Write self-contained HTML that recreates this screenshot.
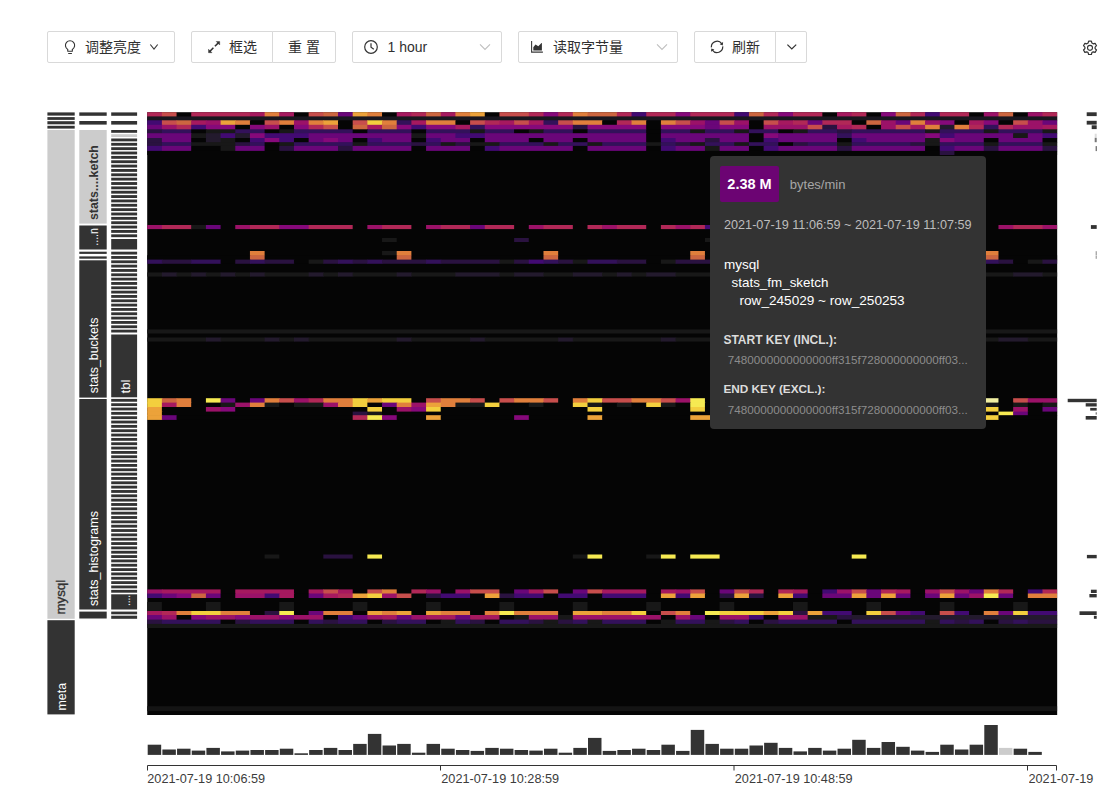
<!DOCTYPE html>
<html lang="zh-CN">
<head>
<meta charset="utf-8">
<title>Key Visualizer</title>
<style>
html,body{margin:0;padding:0;background:#fff;}
body{width:1113px;height:807px;position:relative;overflow:hidden;font-family:"Liberation Sans","Noto Sans CJK SC",sans-serif;color:#333;}
.btn{position:absolute;top:31px;height:32px;box-sizing:border-box;border:1px solid #d9d9d9;background:#fff;border-radius:2px;font-size:14px;line-height:30px;color:#303030;white-space:nowrap;}
.btn span.t{position:absolute;top:0;}
.btn svg{position:absolute;}
#viz{position:absolute;left:0;top:0;}
#viz text{font-family:"Liberation Sans","Noto Sans CJK SC",sans-serif;}
.ax{position:absolute;top:771px;font-size:12.7px;line-height:16px;color:#3c3c3c;white-space:nowrap;}
#tip{position:absolute;left:710px;top:156px;width:276px;height:272.5px;background:#333333;border-radius:4px;color:#fff;}
#tip div{position:absolute;white-space:nowrap;}
</style>
</head>
<body>
<!-- toolbar -->
<div class="btn" style="left:47px;width:128px;">
  <svg style="left:16px;top:7px" width="14" height="16" viewBox="0 0 14 16"><path d="M3.74 12.3V10.4A4.6 4.6 0 1 1 8.34 10.4V12.3M3.3 12.3H8.8M4.2 14.5H7.9" fill="none" stroke="#333" stroke-width="1.1"/></svg>
  <span class="t" style="left:37px;">调整亮度</span>
  <svg style="left:101px;top:10px" width="12" height="10" viewBox="0 0 12 10"><path d="M1.3 2.5L5 7L8.7 2.5" fill="none" stroke="#3a3a3a" stroke-width="1.15"/></svg>
</div>
<div class="btn" style="left:191px;width:82px;border-radius:2px 0 0 2px;">
  <svg style="left:16px;top:9px" width="13" height="13" viewBox="0 0 13 13"><path d="M1.6 10.6L5.4 6.8M6.9 5.3L10.6 1.6" stroke="#333" stroke-width="1.5" fill="none"/><path d="M8.2 0.5H11.7V4ZM0.5 8.2V11.7H4Z" fill="#333" stroke="#333" stroke-width="0.4" stroke-linejoin="round"/></svg>
  <span class="t" style="left:37px;">框选</span>
</div>
<div class="btn" style="left:272px;width:64px;border-radius:0 2px 2px 0;">
  <span class="t" style="left:15px;">重 置</span>
</div>
<div class="btn" style="left:352px;width:150px;">
  <svg style="left:10.3px;top:7px" width="16" height="16" viewBox="0 0 16 16"><circle cx="8" cy="8" r="6.3" fill="none" stroke="#333" stroke-width="1.2"/><path d="M8 4.2V8.3L10.8 10.3" fill="none" stroke="#333" stroke-width="1.2"/></svg>
  <span class="t" style="left:34.5px;">1 hour</span>
  <svg style="left:126px;top:10px" width="12" height="10" viewBox="0 0 12 10"><path d="M1 2.3L6 7.5L11 2.3" fill="none" stroke="#bfbfbf" stroke-width="1.1"/></svg>
</div>
<div class="btn" style="left:518px;width:160px;">
  <svg style="left:12px;top:9px" width="14" height="12" viewBox="0 0 14 12"><path d="M0.6 0.1V11.1H11.9" fill="none" stroke="#3a3a3a" stroke-width="1.1"/><path d="M2.3 9.6V6.2L4.5 3.4L7.3 5.2L10.5 2H10.9V9.6Z" fill="#333"/></svg>
  <span class="t" style="left:34px;">读取字节量</span>
  <svg style="left:137px;top:10px" width="12" height="10" viewBox="0 0 12 10"><path d="M1 2.3L6 7.5L11 2.3" fill="none" stroke="#bfbfbf" stroke-width="1.1"/></svg>
</div>
<div class="btn" style="left:694px;width:82px;border-radius:2px 0 0 2px;">
  <svg style="left:15px;top:8px" width="15" height="15" viewBox="0 0 15 15"><path d="M1.4 7.4A5.7 5.7 0 0 1 11.7 3.6M12.7 6.4A5.7 5.7 0 0 1 2.4 10.2" fill="none" stroke="#333" stroke-width="1.2"/><path d="M13.1 2L12.8 5.4L9.7 4.3ZM1 11.8L1.3 8.4L4.4 9.5Z" fill="#333"/></svg>
  <span class="t" style="left:37px;">刷新</span>
</div>
<div class="btn" style="left:775px;width:32px;border-radius:0 2px 2px 0;">
  <svg style="left:10px;top:10px" width="12" height="10" viewBox="0 0 12 10"><path d="M1.4 2.6L5.8 7L10.2 2.6" fill="none" stroke="#333" stroke-width="1.2"/></svg>
</div>
<svg style="position:absolute;left:1082px;top:40px" width="16" height="16" viewBox="0 0 16 16">
  <path d="M6.6 1.2h2.8l.5 1.9 1.3.75 1.9-.55 1.4 2.4-1.4 1.4v1.5l1.4 1.4-1.4 2.4-1.9-.55-1.3.75-.5 1.9H6.6l-.5-1.9-1.3-.75-1.9.55-1.4-2.4 1.4-1.4V7.1L1.5 5.7l1.4-2.4 1.9.55 1.3-.75z" fill="none" stroke="#333" stroke-width="1.2" stroke-linejoin="round"/>
  <circle cx="8" cy="7.85" r="2.5" fill="none" stroke="#333" stroke-width="1.1"/>
</svg>

<!-- visualisation -->
<svg id="viz" width="1113" height="807" viewBox="0 0 1113 807">
<g id="labels">
<rect x="47.40" y="112.40" width="27.30" height="3.20" fill="#333333"/>
<rect x="47.40" y="117.10" width="27.30" height="2.80" fill="#333333"/>
<rect x="47.40" y="121.20" width="27.30" height="3.10" fill="#333333"/>
<rect x="47.40" y="125.80" width="27.30" height="2.80" fill="#333333"/>
<rect x="47.40" y="130.00" width="27.30" height="488.80" fill="#cccccc"/>
<rect x="47.40" y="620.20" width="27.30" height="94.20" fill="#333333"/>
<rect x="79.30" y="112.40" width="27.40" height="3.40" fill="#333333"/>
<rect x="79.30" y="121.00" width="27.40" height="3.60" fill="#333333"/>
<rect x="79.30" y="130.00" width="27.40" height="93.60" fill="#cccccc"/>
<rect x="79.30" y="225.50" width="27.40" height="24.00" fill="#333333"/>
<rect x="79.30" y="251.70" width="27.40" height="2.20" fill="#333333"/>
<rect x="79.30" y="256.40" width="27.40" height="2.30" fill="#333333"/>
<rect x="79.30" y="260.30" width="27.40" height="137.30" fill="#333333"/>
<rect x="79.30" y="399.00" width="27.40" height="210.50" fill="#333333"/>
<rect x="79.30" y="611.60" width="27.40" height="6.90" fill="#333333"/>
<rect x="111.20" y="112.40" width="25.90" height="3.40" fill="#333333"/>
<rect x="111.20" y="121.00" width="25.90" height="3.60" fill="#333333"/>
<rect x="111.20" y="130.00" width="25.90" height="2.80" fill="#333333"/>
<rect x="111.20" y="134.20" width="25.90" height="2.80" fill="#cccccc"/>
<rect x="111.20" y="138.50" width="25.90" height="2.86" fill="#333333"/>
<rect x="111.20" y="142.86" width="25.90" height="2.86" fill="#333333"/>
<rect x="111.20" y="147.21" width="25.90" height="2.86" fill="#333333"/>
<rect x="111.20" y="151.57" width="25.90" height="2.86" fill="#333333"/>
<rect x="111.20" y="155.93" width="25.90" height="2.86" fill="#333333"/>
<rect x="111.20" y="160.28" width="25.90" height="2.86" fill="#333333"/>
<rect x="111.20" y="164.64" width="25.90" height="2.86" fill="#333333"/>
<rect x="111.20" y="169.00" width="25.90" height="2.86" fill="#333333"/>
<rect x="111.20" y="173.35" width="25.90" height="2.86" fill="#333333"/>
<rect x="111.20" y="177.71" width="25.90" height="2.86" fill="#333333"/>
<rect x="111.20" y="182.07" width="25.90" height="2.86" fill="#333333"/>
<rect x="111.20" y="186.42" width="25.90" height="2.86" fill="#333333"/>
<rect x="111.20" y="190.78" width="25.90" height="2.86" fill="#333333"/>
<rect x="111.20" y="195.13" width="25.90" height="2.86" fill="#333333"/>
<rect x="111.20" y="199.49" width="25.90" height="2.86" fill="#333333"/>
<rect x="111.20" y="203.85" width="25.90" height="2.86" fill="#333333"/>
<rect x="111.20" y="208.20" width="25.90" height="2.86" fill="#333333"/>
<rect x="111.20" y="212.56" width="25.90" height="2.86" fill="#333333"/>
<rect x="111.20" y="216.92" width="25.90" height="2.86" fill="#333333"/>
<rect x="111.20" y="221.27" width="25.90" height="2.86" fill="#333333"/>
<rect x="111.20" y="225.63" width="25.90" height="2.86" fill="#333333"/>
<rect x="111.20" y="229.99" width="25.90" height="2.86" fill="#333333"/>
<rect x="111.20" y="234.34" width="25.90" height="2.86" fill="#333333"/>
<rect x="111.20" y="239.00" width="25.90" height="10.50" fill="#333333"/>
<rect x="111.20" y="251.70" width="25.90" height="2.83" fill="#333333"/>
<rect x="111.20" y="256.03" width="25.90" height="2.83" fill="#333333"/>
<rect x="111.20" y="260.36" width="25.90" height="2.83" fill="#333333"/>
<rect x="111.20" y="264.69" width="25.90" height="2.83" fill="#333333"/>
<rect x="111.20" y="269.03" width="25.90" height="2.83" fill="#333333"/>
<rect x="111.20" y="273.36" width="25.90" height="2.83" fill="#333333"/>
<rect x="111.20" y="277.69" width="25.90" height="2.83" fill="#333333"/>
<rect x="111.20" y="282.02" width="25.90" height="2.83" fill="#333333"/>
<rect x="111.20" y="286.35" width="25.90" height="2.83" fill="#333333"/>
<rect x="111.20" y="290.68" width="25.90" height="2.83" fill="#333333"/>
<rect x="111.20" y="295.02" width="25.90" height="2.83" fill="#333333"/>
<rect x="111.20" y="299.35" width="25.90" height="2.83" fill="#333333"/>
<rect x="111.20" y="303.68" width="25.90" height="2.83" fill="#333333"/>
<rect x="111.20" y="308.01" width="25.90" height="2.83" fill="#333333"/>
<rect x="111.20" y="312.34" width="25.90" height="2.83" fill="#333333"/>
<rect x="111.20" y="316.67" width="25.90" height="2.83" fill="#333333"/>
<rect x="111.20" y="321.01" width="25.90" height="2.83" fill="#333333"/>
<rect x="111.20" y="325.34" width="25.90" height="2.83" fill="#333333"/>
<rect x="111.20" y="329.67" width="25.90" height="2.83" fill="#333333"/>
<rect x="111.20" y="334.50" width="25.90" height="62.80" fill="#333333"/>
<rect x="111.20" y="398.90" width="25.90" height="2.84" fill="#333333"/>
<rect x="111.20" y="403.24" width="25.90" height="2.84" fill="#333333"/>
<rect x="111.20" y="407.58" width="25.90" height="2.84" fill="#333333"/>
<rect x="111.20" y="411.92" width="25.90" height="2.84" fill="#333333"/>
<rect x="111.20" y="416.26" width="25.90" height="2.84" fill="#333333"/>
<rect x="111.20" y="420.60" width="25.90" height="2.84" fill="#333333"/>
<rect x="111.20" y="424.94" width="25.90" height="2.84" fill="#333333"/>
<rect x="111.20" y="429.28" width="25.90" height="2.84" fill="#333333"/>
<rect x="111.20" y="433.62" width="25.90" height="2.84" fill="#333333"/>
<rect x="111.20" y="437.96" width="25.90" height="2.84" fill="#333333"/>
<rect x="111.20" y="442.30" width="25.90" height="2.84" fill="#333333"/>
<rect x="111.20" y="446.64" width="25.90" height="2.84" fill="#333333"/>
<rect x="111.20" y="450.98" width="25.90" height="2.84" fill="#333333"/>
<rect x="111.20" y="455.32" width="25.90" height="2.84" fill="#333333"/>
<rect x="111.20" y="459.66" width="25.90" height="2.84" fill="#333333"/>
<rect x="111.20" y="464.00" width="25.90" height="2.84" fill="#333333"/>
<rect x="111.20" y="468.34" width="25.90" height="2.84" fill="#333333"/>
<rect x="111.20" y="472.68" width="25.90" height="2.84" fill="#333333"/>
<rect x="111.20" y="477.02" width="25.90" height="2.84" fill="#333333"/>
<rect x="111.20" y="481.36" width="25.90" height="2.84" fill="#333333"/>
<rect x="111.20" y="485.70" width="25.90" height="2.84" fill="#333333"/>
<rect x="111.20" y="490.04" width="25.90" height="2.84" fill="#333333"/>
<rect x="111.20" y="494.38" width="25.90" height="2.84" fill="#333333"/>
<rect x="111.20" y="498.72" width="25.90" height="2.84" fill="#333333"/>
<rect x="111.20" y="503.06" width="25.90" height="2.84" fill="#333333"/>
<rect x="111.20" y="507.40" width="25.90" height="2.84" fill="#333333"/>
<rect x="111.20" y="511.74" width="25.90" height="2.84" fill="#333333"/>
<rect x="111.20" y="516.08" width="25.90" height="2.84" fill="#333333"/>
<rect x="111.20" y="520.42" width="25.90" height="2.84" fill="#333333"/>
<rect x="111.20" y="524.76" width="25.90" height="2.84" fill="#333333"/>
<rect x="111.20" y="529.10" width="25.90" height="2.84" fill="#333333"/>
<rect x="111.20" y="533.44" width="25.90" height="2.84" fill="#333333"/>
<rect x="111.20" y="537.78" width="25.90" height="2.84" fill="#333333"/>
<rect x="111.20" y="542.12" width="25.90" height="2.84" fill="#333333"/>
<rect x="111.20" y="546.46" width="25.90" height="2.84" fill="#333333"/>
<rect x="111.20" y="550.80" width="25.90" height="2.84" fill="#333333"/>
<rect x="111.20" y="555.14" width="25.90" height="2.84" fill="#333333"/>
<rect x="111.20" y="559.48" width="25.90" height="2.84" fill="#333333"/>
<rect x="111.20" y="563.82" width="25.90" height="2.84" fill="#333333"/>
<rect x="111.20" y="568.16" width="25.90" height="2.84" fill="#333333"/>
<rect x="111.20" y="572.50" width="25.90" height="2.84" fill="#333333"/>
<rect x="111.20" y="576.84" width="25.90" height="2.84" fill="#333333"/>
<rect x="111.20" y="581.18" width="25.90" height="2.84" fill="#333333"/>
<rect x="111.20" y="585.52" width="25.90" height="2.84" fill="#333333"/>
<rect x="111.20" y="589.86" width="25.90" height="2.84" fill="#333333"/>
<rect x="111.20" y="594.30" width="25.90" height="15.20" fill="#333333"/>
<rect x="111.20" y="611.60" width="25.90" height="2.70" fill="#333333"/>
<rect x="111.20" y="615.70" width="25.90" height="3.10" fill="#333333"/>
<text transform="translate(65.4 614.6) rotate(-90)" fill="#333" font-size="13.5" font-weight="normal" textLength="34.8" lengthAdjust="spacingAndGlyphs" stroke="#333" stroke-width="0.35">mysql</text>
<text transform="translate(66.4 710.4) rotate(-90)" fill="#fff" font-size="13.5" font-weight="normal" textLength="27.4" lengthAdjust="spacingAndGlyphs">meta</text>
<text transform="translate(97.7 220.0) rotate(-90)" fill="#333" font-size="13.5" font-weight="bold" textLength="74.9" lengthAdjust="spacingAndGlyphs">stats....ketch</text>
<text transform="translate(97.7 245.8) rotate(-90)" fill="#fff" font-size="13.5" font-weight="normal" textLength="17.8" lengthAdjust="spacingAndGlyphs">....n</text>
<text transform="translate(97.7 393.2) rotate(-90)" fill="#fff" font-size="13.5" font-weight="normal" textLength="75.7" lengthAdjust="spacingAndGlyphs">stats_buckets</text>
<text transform="translate(97.7 606.0) rotate(-90)" fill="#fff" font-size="13.5" font-weight="normal" textLength="95.0" lengthAdjust="spacingAndGlyphs">stats_histograms</text>
<text transform="translate(129.8 393.5) rotate(-90)" fill="#fff" font-size="13.5" font-weight="normal" textLength="14.0" lengthAdjust="spacingAndGlyphs">tbl</text>
<text transform="translate(129.8 606.1) rotate(-90)" fill="#fff" font-size="13.5" font-weight="normal" textLength="11.3" lengthAdjust="spacingAndGlyphs">....</text>
</g>
<g id="heat">
<rect x="147.2" y="112.2" width="909.97" height="602.8" fill="#050505"/>
<rect x="147.20" y="112.20" width="15.28" height="4.90" fill="#b12857"/>
<rect x="161.88" y="112.20" width="14.68" height="4.90" fill="#c74e4c"/>
<rect x="191.23" y="112.20" width="59.31" height="4.90" fill="#b12857"/>
<rect x="249.94" y="112.20" width="15.28" height="4.90" fill="#a6195f"/>
<rect x="264.62" y="112.20" width="15.28" height="4.90" fill="#e07f3c"/>
<rect x="279.29" y="112.20" width="14.68" height="4.90" fill="#a6195f"/>
<rect x="308.65" y="112.20" width="15.28" height="4.90" fill="#c74e4c"/>
<rect x="323.32" y="112.20" width="15.28" height="4.90" fill="#cc6640"/>
<rect x="338.00" y="112.20" width="15.28" height="4.90" fill="#6a0679"/>
<rect x="352.68" y="112.20" width="15.28" height="4.90" fill="#eca23a"/>
<rect x="367.36" y="112.20" width="14.68" height="4.90" fill="#e07f3c"/>
<rect x="396.71" y="112.20" width="15.28" height="4.90" fill="#a6195f"/>
<rect x="411.39" y="112.20" width="15.28" height="4.90" fill="#b12857"/>
<rect x="426.06" y="112.20" width="15.28" height="4.90" fill="#cc6640"/>
<rect x="440.74" y="112.20" width="15.28" height="4.90" fill="#a6195f"/>
<rect x="455.42" y="112.20" width="15.28" height="4.90" fill="#e07f3c"/>
<rect x="470.09" y="112.20" width="14.68" height="4.90" fill="#eca23a"/>
<rect x="499.45" y="112.20" width="29.95" height="4.90" fill="#c74e4c"/>
<rect x="528.80" y="112.20" width="15.28" height="4.90" fill="#b12857"/>
<rect x="543.48" y="112.20" width="15.28" height="4.90" fill="#86097a"/>
<rect x="558.16" y="112.20" width="15.28" height="4.90" fill="#b12857"/>
<rect x="572.83" y="112.20" width="15.28" height="4.90" fill="#e07f3c"/>
<rect x="587.51" y="112.20" width="29.95" height="4.90" fill="#cc6640"/>
<rect x="616.86" y="112.20" width="15.28" height="4.90" fill="#b12857"/>
<rect x="631.54" y="112.20" width="15.28" height="4.90" fill="#420a72"/>
<rect x="646.22" y="112.20" width="29.95" height="4.90" fill="#b12857"/>
<rect x="675.57" y="112.20" width="15.28" height="4.90" fill="#86097a"/>
<rect x="690.25" y="112.20" width="44.63" height="4.90" fill="#b12857"/>
<rect x="734.28" y="112.20" width="15.28" height="4.90" fill="#420a72"/>
<rect x="748.96" y="112.20" width="15.28" height="4.90" fill="#cc6640"/>
<rect x="763.63" y="112.20" width="15.28" height="4.90" fill="#b12857"/>
<rect x="778.31" y="112.20" width="15.28" height="4.90" fill="#86097a"/>
<rect x="792.99" y="112.20" width="29.35" height="4.90" fill="#b12857"/>
<rect x="837.02" y="112.20" width="15.28" height="4.90" fill="#a6195f"/>
<rect x="851.70" y="112.20" width="14.68" height="4.90" fill="#b12857"/>
<rect x="881.05" y="112.20" width="15.28" height="4.90" fill="#86097a"/>
<rect x="895.73" y="112.20" width="15.28" height="4.90" fill="#cc6640"/>
<rect x="910.40" y="112.20" width="15.28" height="4.90" fill="#b12857"/>
<rect x="925.08" y="112.20" width="15.28" height="4.90" fill="#420a72"/>
<rect x="939.76" y="112.20" width="29.35" height="4.90" fill="#b12857"/>
<rect x="983.79" y="112.20" width="15.28" height="4.90" fill="#9b1268"/>
<rect x="998.47" y="112.20" width="14.68" height="4.90" fill="#cc6640"/>
<rect x="1027.82" y="112.20" width="15.28" height="4.90" fill="#9b1268"/>
<rect x="1042.50" y="112.20" width="14.60" height="4.90" fill="#b12857"/>
<rect x="147.20" y="116.40" width="909.90" height="4.60" fill="#19171f"/>
<rect x="147.20" y="120.30" width="15.28" height="5.20" fill="#420a72"/>
<rect x="161.88" y="120.30" width="15.28" height="5.20" fill="#c74e4c"/>
<rect x="176.55" y="120.30" width="15.28" height="5.20" fill="#cc6640"/>
<rect x="191.23" y="120.30" width="15.28" height="5.20" fill="#a6195f"/>
<rect x="205.91" y="120.30" width="15.28" height="5.20" fill="#9b1268"/>
<rect x="220.58" y="120.30" width="15.28" height="5.20" fill="#eca23a"/>
<rect x="235.26" y="120.30" width="15.28" height="5.20" fill="#e07f3c"/>
<rect x="249.94" y="120.30" width="15.28" height="5.20" fill="#050505"/>
<rect x="264.62" y="120.30" width="15.28" height="5.20" fill="#c74e4c"/>
<rect x="279.29" y="120.30" width="15.28" height="5.20" fill="#e07f3c"/>
<rect x="293.97" y="120.30" width="15.28" height="5.20" fill="#9b1268"/>
<rect x="308.65" y="120.30" width="15.28" height="5.20" fill="#e07f3c"/>
<rect x="323.32" y="120.30" width="15.28" height="5.20" fill="#eca23a"/>
<rect x="338.00" y="120.30" width="15.28" height="5.20" fill="#050505"/>
<rect x="352.68" y="120.30" width="15.28" height="5.20" fill="#c74e4c"/>
<rect x="367.36" y="120.30" width="15.28" height="5.20" fill="#f3cf3e"/>
<rect x="382.03" y="120.30" width="15.28" height="5.20" fill="#e07f3c"/>
<rect x="396.71" y="120.30" width="15.28" height="5.20" fill="#33115a"/>
<rect x="411.39" y="120.30" width="15.28" height="5.20" fill="#a6195f"/>
<rect x="426.06" y="120.30" width="29.95" height="5.20" fill="#e07f3c"/>
<rect x="455.42" y="120.30" width="15.28" height="5.20" fill="#050505"/>
<rect x="470.09" y="120.30" width="15.28" height="5.20" fill="#c74e4c"/>
<rect x="484.77" y="120.30" width="15.28" height="5.20" fill="#b12857"/>
<rect x="499.45" y="120.30" width="15.28" height="5.20" fill="#a6195f"/>
<rect x="514.12" y="120.30" width="15.28" height="5.20" fill="#c74e4c"/>
<rect x="528.80" y="120.30" width="15.28" height="5.20" fill="#a6195f"/>
<rect x="543.48" y="120.30" width="15.28" height="5.20" fill="#33115a"/>
<rect x="558.16" y="120.30" width="15.28" height="5.20" fill="#c74e4c"/>
<rect x="572.83" y="120.30" width="29.95" height="5.20" fill="#e07f3c"/>
<rect x="602.19" y="120.30" width="15.28" height="5.20" fill="#050505"/>
<rect x="616.86" y="120.30" width="15.28" height="5.20" fill="#b12857"/>
<rect x="631.54" y="120.30" width="15.28" height="5.20" fill="#e07f3c"/>
<rect x="646.22" y="120.30" width="15.28" height="5.20" fill="#050505"/>
<rect x="660.89" y="120.30" width="15.28" height="5.20" fill="#e07f3c"/>
<rect x="675.57" y="120.30" width="15.28" height="5.20" fill="#c74e4c"/>
<rect x="690.25" y="120.30" width="15.28" height="5.20" fill="#9b1268"/>
<rect x="704.93" y="120.30" width="15.28" height="5.20" fill="#6a0679"/>
<rect x="719.60" y="120.30" width="15.28" height="5.20" fill="#c74e4c"/>
<rect x="734.28" y="120.30" width="15.28" height="5.20" fill="#9b1268"/>
<rect x="748.96" y="120.30" width="15.28" height="5.20" fill="#050505"/>
<rect x="763.63" y="120.30" width="15.28" height="5.20" fill="#c74e4c"/>
<rect x="778.31" y="120.30" width="15.28" height="5.20" fill="#a6195f"/>
<rect x="792.99" y="120.30" width="15.28" height="5.20" fill="#b12857"/>
<rect x="807.66" y="120.30" width="15.28" height="5.20" fill="#6a0679"/>
<rect x="822.34" y="120.30" width="29.95" height="5.20" fill="#b12857"/>
<rect x="851.70" y="120.30" width="15.28" height="5.20" fill="#050505"/>
<rect x="866.37" y="120.30" width="15.28" height="5.20" fill="#cc6640"/>
<rect x="881.05" y="120.30" width="15.28" height="5.20" fill="#9b1268"/>
<rect x="895.73" y="120.30" width="15.28" height="5.20" fill="#6a0679"/>
<rect x="910.40" y="120.30" width="15.28" height="5.20" fill="#e07f3c"/>
<rect x="925.08" y="120.30" width="15.28" height="5.20" fill="#9b1268"/>
<rect x="939.76" y="120.30" width="15.28" height="5.20" fill="#86097a"/>
<rect x="954.43" y="120.30" width="15.28" height="5.20" fill="#050505"/>
<rect x="969.11" y="120.30" width="15.28" height="5.20" fill="#a6195f"/>
<rect x="983.79" y="120.30" width="15.28" height="5.20" fill="#86097a"/>
<rect x="998.47" y="120.30" width="15.28" height="5.20" fill="#050505"/>
<rect x="1013.14" y="120.30" width="15.28" height="5.20" fill="#c74e4c"/>
<rect x="1027.82" y="120.30" width="15.28" height="5.20" fill="#9b1268"/>
<rect x="1042.50" y="120.30" width="14.60" height="5.20" fill="#6a0679"/>
<rect x="147.20" y="124.80" width="15.28" height="5.20" fill="#6a0679"/>
<rect x="161.88" y="124.80" width="15.28" height="5.20" fill="#9b1268"/>
<rect x="176.55" y="124.80" width="15.28" height="5.20" fill="#b12857"/>
<rect x="191.23" y="124.80" width="15.28" height="5.20" fill="#420a72"/>
<rect x="205.91" y="124.80" width="29.95" height="5.20" fill="#86097a"/>
<rect x="235.26" y="124.80" width="15.28" height="5.20" fill="#050505"/>
<rect x="249.94" y="124.80" width="15.28" height="5.20" fill="#86097a"/>
<rect x="264.62" y="124.80" width="15.28" height="5.20" fill="#9b1268"/>
<rect x="279.29" y="124.80" width="15.28" height="5.20" fill="#050505"/>
<rect x="293.97" y="124.80" width="15.28" height="5.20" fill="#86097a"/>
<rect x="308.65" y="124.80" width="15.28" height="5.20" fill="#b12857"/>
<rect x="323.32" y="124.80" width="15.28" height="5.20" fill="#c74e4c"/>
<rect x="338.00" y="124.80" width="15.28" height="5.20" fill="#050505"/>
<rect x="352.68" y="124.80" width="15.28" height="5.20" fill="#cc6640"/>
<rect x="367.36" y="124.80" width="15.28" height="5.20" fill="#a6195f"/>
<rect x="382.03" y="124.80" width="15.28" height="5.20" fill="#cc6640"/>
<rect x="396.71" y="124.80" width="15.28" height="5.20" fill="#86097a"/>
<rect x="411.39" y="124.80" width="15.28" height="5.20" fill="#420a72"/>
<rect x="426.06" y="124.80" width="29.95" height="5.20" fill="#86097a"/>
<rect x="455.42" y="124.80" width="15.28" height="5.20" fill="#a6195f"/>
<rect x="470.09" y="124.80" width="15.28" height="5.20" fill="#33115a"/>
<rect x="484.77" y="124.80" width="88.66" height="5.20" fill="#86097a"/>
<rect x="572.83" y="124.80" width="15.28" height="5.20" fill="#2a1240"/>
<rect x="587.51" y="124.80" width="59.31" height="5.20" fill="#86097a"/>
<rect x="646.22" y="124.80" width="15.28" height="5.20" fill="#050505"/>
<rect x="660.89" y="124.80" width="44.63" height="5.20" fill="#86097a"/>
<rect x="704.93" y="124.80" width="15.28" height="5.20" fill="#6a0679"/>
<rect x="719.60" y="124.80" width="29.95" height="5.20" fill="#86097a"/>
<rect x="748.96" y="124.80" width="15.28" height="5.20" fill="#050505"/>
<rect x="763.63" y="124.80" width="44.63" height="5.20" fill="#9b1268"/>
<rect x="807.66" y="124.80" width="15.28" height="5.20" fill="#c74e4c"/>
<rect x="822.34" y="124.80" width="15.28" height="5.20" fill="#2a1240"/>
<rect x="837.02" y="124.80" width="15.28" height="5.20" fill="#a6195f"/>
<rect x="851.70" y="124.80" width="15.28" height="5.20" fill="#b12857"/>
<rect x="866.37" y="124.80" width="15.28" height="5.20" fill="#050505"/>
<rect x="881.05" y="124.80" width="15.28" height="5.20" fill="#9b1268"/>
<rect x="895.73" y="124.80" width="15.28" height="5.20" fill="#c74e4c"/>
<rect x="910.40" y="124.80" width="15.28" height="5.20" fill="#a6195f"/>
<rect x="925.08" y="124.80" width="15.28" height="5.20" fill="#e07f3c"/>
<rect x="939.76" y="124.80" width="15.28" height="5.20" fill="#231a2d"/>
<rect x="954.43" y="124.80" width="15.28" height="5.20" fill="#e07f3c"/>
<rect x="969.11" y="124.80" width="15.28" height="5.20" fill="#b12857"/>
<rect x="983.79" y="124.80" width="15.28" height="5.20" fill="#33115a"/>
<rect x="998.47" y="124.80" width="15.28" height="5.20" fill="#b12857"/>
<rect x="1013.14" y="124.80" width="29.95" height="5.20" fill="#9b1268"/>
<rect x="1042.50" y="124.80" width="14.60" height="5.20" fill="#a6195f"/>
<rect x="147.20" y="129.30" width="15.28" height="4.60" fill="#2a1240"/>
<rect x="161.88" y="129.30" width="29.95" height="4.60" fill="#33115a"/>
<rect x="191.23" y="129.30" width="15.28" height="4.60" fill="#050505"/>
<rect x="205.91" y="129.30" width="29.95" height="4.60" fill="#181818"/>
<rect x="235.26" y="129.30" width="29.95" height="4.60" fill="#33115a"/>
<rect x="264.62" y="129.30" width="15.28" height="4.60" fill="#050505"/>
<rect x="279.29" y="129.30" width="15.28" height="4.60" fill="#181818"/>
<rect x="293.97" y="129.30" width="59.31" height="4.60" fill="#33115a"/>
<rect x="352.68" y="129.30" width="15.28" height="4.60" fill="#050505"/>
<rect x="367.36" y="129.30" width="44.63" height="4.60" fill="#33115a"/>
<rect x="411.39" y="129.30" width="15.28" height="4.60" fill="#050505"/>
<rect x="426.06" y="129.30" width="44.63" height="4.60" fill="#33115a"/>
<rect x="470.09" y="129.30" width="15.28" height="4.60" fill="#181818"/>
<rect x="484.77" y="129.30" width="29.95" height="4.60" fill="#33115a"/>
<rect x="514.12" y="129.30" width="15.28" height="4.60" fill="#050505"/>
<rect x="528.80" y="129.30" width="15.28" height="4.60" fill="#181818"/>
<rect x="543.48" y="129.30" width="29.95" height="4.60" fill="#33115a"/>
<rect x="572.83" y="129.30" width="15.28" height="4.60" fill="#050505"/>
<rect x="587.51" y="129.30" width="59.31" height="4.60" fill="#33115a"/>
<rect x="646.22" y="129.30" width="15.28" height="4.60" fill="#050505"/>
<rect x="660.89" y="129.30" width="29.95" height="4.60" fill="#33115a"/>
<rect x="690.25" y="129.30" width="15.28" height="4.60" fill="#181818"/>
<rect x="704.93" y="129.30" width="29.95" height="4.60" fill="#33115a"/>
<rect x="734.28" y="129.30" width="15.28" height="4.60" fill="#181818"/>
<rect x="748.96" y="129.30" width="29.95" height="4.60" fill="#33115a"/>
<rect x="778.31" y="129.30" width="15.28" height="4.60" fill="#050505"/>
<rect x="792.99" y="129.30" width="15.28" height="4.60" fill="#181818"/>
<rect x="807.66" y="129.30" width="29.95" height="4.60" fill="#33115a"/>
<rect x="837.02" y="129.30" width="15.28" height="4.60" fill="#2a1240"/>
<rect x="851.70" y="129.30" width="73.98" height="4.60" fill="#33115a"/>
<rect x="925.08" y="129.30" width="15.28" height="4.60" fill="#181818"/>
<rect x="939.76" y="129.30" width="44.63" height="4.60" fill="#33115a"/>
<rect x="983.79" y="129.30" width="15.28" height="4.60" fill="#181818"/>
<rect x="998.47" y="129.30" width="44.63" height="4.60" fill="#33115a"/>
<rect x="1042.50" y="129.30" width="14.60" height="4.60" fill="#181818"/>
<rect x="147.20" y="133.20" width="44.63" height="5.50" fill="#6a0679"/>
<rect x="191.23" y="133.20" width="15.28" height="5.50" fill="#181818"/>
<rect x="205.91" y="133.20" width="15.28" height="5.50" fill="#231a2d"/>
<rect x="220.58" y="133.20" width="15.28" height="5.50" fill="#420a72"/>
<rect x="235.26" y="133.20" width="15.28" height="5.50" fill="#231a2d"/>
<rect x="249.94" y="133.20" width="15.28" height="5.50" fill="#86097a"/>
<rect x="264.62" y="133.20" width="44.63" height="5.50" fill="#420a72"/>
<rect x="308.65" y="133.20" width="103.34" height="5.50" fill="#6a0679"/>
<rect x="411.39" y="133.20" width="15.28" height="5.50" fill="#181818"/>
<rect x="426.06" y="133.20" width="29.95" height="5.50" fill="#6a0679"/>
<rect x="455.42" y="133.20" width="29.95" height="5.50" fill="#420a72"/>
<rect x="484.77" y="133.20" width="162.05" height="5.50" fill="#6a0679"/>
<rect x="646.22" y="133.20" width="15.28" height="5.50" fill="#050505"/>
<rect x="660.89" y="133.20" width="88.66" height="5.50" fill="#6a0679"/>
<rect x="748.96" y="133.20" width="15.28" height="5.50" fill="#050505"/>
<rect x="763.63" y="133.20" width="15.28" height="5.50" fill="#86097a"/>
<rect x="778.31" y="133.20" width="59.31" height="5.50" fill="#6a0679"/>
<rect x="837.02" y="133.20" width="15.28" height="5.50" fill="#33115a"/>
<rect x="851.70" y="133.20" width="73.98" height="5.50" fill="#6a0679"/>
<rect x="925.08" y="133.20" width="15.28" height="5.50" fill="#86097a"/>
<rect x="939.76" y="133.20" width="15.28" height="5.50" fill="#420a72"/>
<rect x="954.43" y="133.20" width="59.31" height="5.50" fill="#6a0679"/>
<rect x="1013.14" y="133.20" width="15.28" height="5.50" fill="#181818"/>
<rect x="1027.82" y="133.20" width="15.28" height="5.50" fill="#6a0679"/>
<rect x="1042.50" y="133.20" width="14.60" height="5.50" fill="#420a72"/>
<rect x="147.20" y="138.00" width="15.28" height="4.90" fill="#2a1240"/>
<rect x="161.88" y="138.00" width="29.95" height="4.90" fill="#6a0679"/>
<rect x="191.23" y="138.00" width="15.28" height="4.90" fill="#050505"/>
<rect x="205.91" y="138.00" width="15.28" height="4.90" fill="#231a2d"/>
<rect x="220.58" y="138.00" width="15.28" height="4.90" fill="#181818"/>
<rect x="235.26" y="138.00" width="15.28" height="4.90" fill="#050505"/>
<rect x="249.94" y="138.00" width="15.28" height="4.90" fill="#420a72"/>
<rect x="264.62" y="138.00" width="15.28" height="4.90" fill="#86097a"/>
<rect x="279.29" y="138.00" width="15.28" height="4.90" fill="#420a72"/>
<rect x="293.97" y="138.00" width="15.28" height="4.90" fill="#050505"/>
<rect x="308.65" y="138.00" width="15.28" height="4.90" fill="#6a0679"/>
<rect x="323.32" y="138.00" width="15.28" height="4.90" fill="#86097a"/>
<rect x="338.00" y="138.00" width="15.28" height="4.90" fill="#6a0679"/>
<rect x="352.68" y="138.00" width="15.28" height="4.90" fill="#050505"/>
<rect x="367.36" y="138.00" width="15.28" height="4.90" fill="#420a72"/>
<rect x="382.03" y="138.00" width="29.95" height="4.90" fill="#6a0679"/>
<rect x="411.39" y="138.00" width="15.28" height="4.90" fill="#050505"/>
<rect x="426.06" y="138.00" width="15.28" height="4.90" fill="#420a72"/>
<rect x="440.74" y="138.00" width="29.95" height="4.90" fill="#6a0679"/>
<rect x="470.09" y="138.00" width="15.28" height="4.90" fill="#050505"/>
<rect x="484.77" y="138.00" width="44.63" height="4.90" fill="#6a0679"/>
<rect x="528.80" y="138.00" width="15.28" height="4.90" fill="#050505"/>
<rect x="543.48" y="138.00" width="29.95" height="4.90" fill="#6a0679"/>
<rect x="572.83" y="138.00" width="15.28" height="4.90" fill="#050505"/>
<rect x="587.51" y="138.00" width="59.31" height="4.90" fill="#6a0679"/>
<rect x="646.22" y="138.00" width="15.28" height="4.90" fill="#050505"/>
<rect x="660.89" y="138.00" width="15.28" height="4.90" fill="#420a72"/>
<rect x="675.57" y="138.00" width="29.95" height="4.90" fill="#6a0679"/>
<rect x="704.93" y="138.00" width="15.28" height="4.90" fill="#2a1240"/>
<rect x="719.60" y="138.00" width="29.95" height="4.90" fill="#6a0679"/>
<rect x="748.96" y="138.00" width="15.28" height="4.90" fill="#050505"/>
<rect x="763.63" y="138.00" width="15.28" height="4.90" fill="#420a72"/>
<rect x="778.31" y="138.00" width="59.31" height="4.90" fill="#6a0679"/>
<rect x="837.02" y="138.00" width="15.28" height="4.90" fill="#050505"/>
<rect x="851.70" y="138.00" width="15.28" height="4.90" fill="#420a72"/>
<rect x="866.37" y="138.00" width="59.31" height="4.90" fill="#6a0679"/>
<rect x="925.08" y="138.00" width="15.28" height="4.90" fill="#181818"/>
<rect x="939.76" y="138.00" width="15.28" height="4.90" fill="#86097a"/>
<rect x="954.43" y="138.00" width="29.95" height="4.90" fill="#6a0679"/>
<rect x="983.79" y="138.00" width="15.28" height="4.90" fill="#050505"/>
<rect x="998.47" y="138.00" width="44.63" height="4.90" fill="#6a0679"/>
<rect x="1042.50" y="138.00" width="14.60" height="4.90" fill="#050505"/>
<rect x="147.20" y="142.20" width="15.28" height="4.40" fill="#2a1240"/>
<rect x="161.88" y="142.20" width="29.95" height="4.40" fill="#33115a"/>
<rect x="191.23" y="142.20" width="44.63" height="4.40" fill="#181818"/>
<rect x="235.26" y="142.20" width="15.28" height="4.40" fill="#2a1240"/>
<rect x="249.94" y="142.20" width="15.28" height="4.40" fill="#33115a"/>
<rect x="264.62" y="142.20" width="15.28" height="4.40" fill="#050505"/>
<rect x="279.29" y="142.20" width="15.28" height="4.40" fill="#181818"/>
<rect x="293.97" y="142.20" width="59.31" height="4.40" fill="#33115a"/>
<rect x="352.68" y="142.20" width="15.28" height="4.40" fill="#181818"/>
<rect x="367.36" y="142.20" width="44.63" height="4.40" fill="#33115a"/>
<rect x="411.39" y="142.20" width="15.28" height="4.40" fill="#2a1240"/>
<rect x="426.06" y="142.20" width="15.28" height="4.40" fill="#33115a"/>
<rect x="440.74" y="142.20" width="15.28" height="4.40" fill="#181818"/>
<rect x="455.42" y="142.20" width="15.28" height="4.40" fill="#2a1240"/>
<rect x="470.09" y="142.20" width="29.95" height="4.40" fill="#181818"/>
<rect x="499.45" y="142.20" width="44.63" height="4.40" fill="#33115a"/>
<rect x="543.48" y="142.20" width="15.28" height="4.40" fill="#181818"/>
<rect x="558.16" y="142.20" width="29.95" height="4.40" fill="#33115a"/>
<rect x="587.51" y="142.20" width="15.28" height="4.40" fill="#181818"/>
<rect x="602.19" y="142.20" width="44.63" height="4.40" fill="#33115a"/>
<rect x="646.22" y="142.20" width="15.28" height="4.40" fill="#181818"/>
<rect x="660.89" y="142.20" width="15.28" height="4.40" fill="#33115a"/>
<rect x="675.57" y="142.20" width="15.28" height="4.40" fill="#2a1240"/>
<rect x="690.25" y="142.20" width="15.28" height="4.40" fill="#181818"/>
<rect x="704.93" y="142.20" width="29.95" height="4.40" fill="#33115a"/>
<rect x="734.28" y="142.20" width="15.28" height="4.40" fill="#181818"/>
<rect x="748.96" y="142.20" width="29.95" height="4.40" fill="#33115a"/>
<rect x="778.31" y="142.20" width="15.28" height="4.40" fill="#050505"/>
<rect x="792.99" y="142.20" width="15.28" height="4.40" fill="#2a1240"/>
<rect x="807.66" y="142.20" width="29.95" height="4.40" fill="#33115a"/>
<rect x="837.02" y="142.20" width="15.28" height="4.40" fill="#181818"/>
<rect x="851.70" y="142.20" width="59.31" height="4.40" fill="#33115a"/>
<rect x="910.40" y="142.20" width="15.28" height="4.40" fill="#2a1240"/>
<rect x="925.08" y="142.20" width="15.28" height="4.40" fill="#181818"/>
<rect x="939.76" y="142.20" width="44.63" height="4.40" fill="#33115a"/>
<rect x="983.79" y="142.20" width="15.28" height="4.40" fill="#181818"/>
<rect x="998.47" y="142.20" width="44.63" height="4.40" fill="#33115a"/>
<rect x="1042.50" y="142.20" width="14.60" height="4.40" fill="#181818"/>
<rect x="147.20" y="145.90" width="15.28" height="5.70" fill="#420a72"/>
<rect x="161.88" y="145.90" width="29.95" height="5.70" fill="#6a0679"/>
<rect x="191.23" y="145.90" width="29.95" height="5.70" fill="#050505"/>
<rect x="220.58" y="145.90" width="15.28" height="5.70" fill="#181818"/>
<rect x="235.26" y="145.90" width="29.95" height="5.70" fill="#6a0679"/>
<rect x="264.62" y="145.90" width="15.28" height="5.70" fill="#050505"/>
<rect x="279.29" y="145.90" width="15.28" height="5.70" fill="#2a1240"/>
<rect x="293.97" y="145.90" width="44.63" height="5.70" fill="#6a0679"/>
<rect x="338.00" y="145.90" width="15.28" height="5.70" fill="#2a1240"/>
<rect x="352.68" y="145.90" width="59.31" height="5.70" fill="#6a0679"/>
<rect x="411.39" y="145.90" width="15.28" height="5.70" fill="#050505"/>
<rect x="426.06" y="145.90" width="44.63" height="5.70" fill="#6a0679"/>
<rect x="470.09" y="145.90" width="15.28" height="5.70" fill="#050505"/>
<rect x="484.77" y="145.90" width="15.28" height="5.70" fill="#420a72"/>
<rect x="499.45" y="145.90" width="73.98" height="5.70" fill="#6a0679"/>
<rect x="572.83" y="145.90" width="15.28" height="5.70" fill="#050505"/>
<rect x="587.51" y="145.90" width="59.31" height="5.70" fill="#6a0679"/>
<rect x="646.22" y="145.90" width="15.28" height="5.70" fill="#050505"/>
<rect x="660.89" y="145.90" width="15.28" height="5.70" fill="#420a72"/>
<rect x="675.57" y="145.90" width="29.95" height="5.70" fill="#6a0679"/>
<rect x="704.93" y="145.90" width="15.28" height="5.70" fill="#181818"/>
<rect x="719.60" y="145.90" width="29.95" height="5.70" fill="#6a0679"/>
<rect x="748.96" y="145.90" width="15.28" height="5.70" fill="#050505"/>
<rect x="763.63" y="145.90" width="15.28" height="5.70" fill="#420a72"/>
<rect x="778.31" y="145.90" width="59.31" height="5.70" fill="#6a0679"/>
<rect x="837.02" y="145.90" width="15.28" height="5.70" fill="#2a1240"/>
<rect x="851.70" y="145.90" width="73.98" height="5.70" fill="#6a0679"/>
<rect x="925.08" y="145.90" width="15.28" height="5.70" fill="#050505"/>
<rect x="939.76" y="145.90" width="15.28" height="5.70" fill="#420a72"/>
<rect x="954.43" y="145.90" width="29.95" height="5.70" fill="#6a0679"/>
<rect x="983.79" y="145.90" width="15.28" height="5.70" fill="#2a1240"/>
<rect x="998.47" y="145.90" width="44.63" height="5.70" fill="#6a0679"/>
<rect x="1042.50" y="145.90" width="14.60" height="5.70" fill="#2a1240"/>
<rect x="147.20" y="150.90" width="793.16" height="4.10" fill="#050505"/>
<rect x="939.76" y="150.90" width="15.28" height="4.10" fill="#2a1240"/>
<rect x="954.43" y="150.90" width="102.66" height="4.10" fill="#050505"/>
<rect x="147.20" y="225.00" width="15.28" height="4.10" fill="#9b1268"/>
<rect x="161.88" y="225.00" width="29.95" height="4.10" fill="#b12857"/>
<rect x="191.23" y="225.00" width="15.28" height="4.10" fill="#181818"/>
<rect x="205.91" y="225.00" width="14.68" height="4.10" fill="#6a0679"/>
<rect x="235.26" y="225.00" width="15.28" height="4.10" fill="#9b1268"/>
<rect x="249.94" y="225.00" width="29.95" height="4.10" fill="#b12857"/>
<rect x="279.29" y="225.00" width="29.95" height="4.10" fill="#86097a"/>
<rect x="308.65" y="225.00" width="44.03" height="4.10" fill="#b12857"/>
<rect x="367.36" y="225.00" width="15.28" height="4.10" fill="#9b1268"/>
<rect x="382.03" y="225.00" width="29.35" height="4.10" fill="#b12857"/>
<rect x="426.06" y="225.00" width="15.28" height="4.10" fill="#9b1268"/>
<rect x="440.74" y="225.00" width="29.95" height="4.10" fill="#b12857"/>
<rect x="470.09" y="225.00" width="15.28" height="4.10" fill="#6a0679"/>
<rect x="484.77" y="225.00" width="29.35" height="4.10" fill="#b12857"/>
<rect x="528.80" y="225.00" width="15.28" height="4.10" fill="#9b1268"/>
<rect x="543.48" y="225.00" width="29.35" height="4.10" fill="#b12857"/>
<rect x="587.51" y="225.00" width="15.28" height="4.10" fill="#b12857"/>
<rect x="602.19" y="225.00" width="15.28" height="4.10" fill="#9b1268"/>
<rect x="616.86" y="225.00" width="29.35" height="4.10" fill="#b12857"/>
<rect x="660.89" y="225.00" width="15.28" height="4.10" fill="#b12857"/>
<rect x="675.57" y="225.00" width="15.28" height="4.10" fill="#9b1268"/>
<rect x="690.25" y="225.00" width="15.28" height="4.10" fill="#b12857"/>
<rect x="704.93" y="225.00" width="15.28" height="4.10" fill="#420a72"/>
<rect x="719.60" y="225.00" width="29.35" height="4.10" fill="#b12857"/>
<rect x="763.63" y="225.00" width="15.28" height="4.10" fill="#9b1268"/>
<rect x="778.31" y="225.00" width="44.03" height="4.10" fill="#b12857"/>
<rect x="837.02" y="225.00" width="15.28" height="4.10" fill="#9b1268"/>
<rect x="851.70" y="225.00" width="44.03" height="4.10" fill="#b12857"/>
<rect x="910.40" y="225.00" width="15.28" height="4.10" fill="#9b1268"/>
<rect x="925.08" y="225.00" width="44.03" height="4.10" fill="#b12857"/>
<rect x="998.47" y="225.00" width="15.28" height="4.10" fill="#9b1268"/>
<rect x="1013.14" y="225.00" width="29.95" height="4.10" fill="#b12857"/>
<rect x="1042.50" y="225.00" width="14.60" height="4.10" fill="#9b1268"/>
<rect x="382.03" y="238.00" width="14.68" height="4.00" fill="#181818"/>
<rect x="514.12" y="238.00" width="14.68" height="4.00" fill="#2a1240"/>
<rect x="704.93" y="238.00" width="14.68" height="4.00" fill="#181818"/>
<rect x="249.94" y="251.00" width="14.68" height="4.90" fill="#e07f3c"/>
<rect x="382.03" y="251.00" width="15.28" height="4.90" fill="#181818"/>
<rect x="396.71" y="251.00" width="14.68" height="4.90" fill="#e07f3c"/>
<rect x="543.48" y="251.00" width="14.68" height="4.90" fill="#e07f3c"/>
<rect x="690.25" y="251.00" width="14.68" height="4.90" fill="#e07f3c"/>
<rect x="837.02" y="251.00" width="14.68" height="4.90" fill="#e07f3c"/>
<rect x="983.79" y="251.00" width="14.68" height="4.90" fill="#e07f3c"/>
<rect x="147.20" y="255.20" width="103.34" height="5.10" fill="#050505"/>
<rect x="249.94" y="255.20" width="15.28" height="5.10" fill="#cc6640"/>
<rect x="264.62" y="255.20" width="132.69" height="5.10" fill="#050505"/>
<rect x="396.71" y="255.20" width="15.28" height="5.10" fill="#cc6640"/>
<rect x="411.39" y="255.20" width="132.69" height="5.10" fill="#050505"/>
<rect x="543.48" y="255.20" width="15.28" height="5.10" fill="#cc6640"/>
<rect x="558.16" y="255.20" width="132.69" height="5.10" fill="#050505"/>
<rect x="690.25" y="255.20" width="15.28" height="5.10" fill="#cc6640"/>
<rect x="704.93" y="255.20" width="132.69" height="5.10" fill="#050505"/>
<rect x="837.02" y="255.20" width="15.28" height="5.10" fill="#cc6640"/>
<rect x="851.70" y="255.20" width="132.69" height="5.10" fill="#050505"/>
<rect x="983.79" y="255.20" width="15.28" height="5.10" fill="#cc6640"/>
<rect x="998.47" y="255.20" width="58.63" height="5.10" fill="#050505"/>
<rect x="147.20" y="259.60" width="15.28" height="4.20" fill="#33115a"/>
<rect x="161.88" y="259.60" width="29.95" height="4.20" fill="#2a1240"/>
<rect x="191.23" y="259.60" width="29.95" height="4.20" fill="#33115a"/>
<rect x="220.58" y="259.60" width="15.28" height="4.20" fill="#050505"/>
<rect x="235.26" y="259.60" width="15.28" height="4.20" fill="#2a1240"/>
<rect x="249.94" y="259.60" width="15.28" height="4.20" fill="#33115a"/>
<rect x="264.62" y="259.60" width="29.95" height="4.20" fill="#2a1240"/>
<rect x="293.97" y="259.60" width="15.28" height="4.20" fill="#050505"/>
<rect x="308.65" y="259.60" width="15.28" height="4.20" fill="#181818"/>
<rect x="323.32" y="259.60" width="15.28" height="4.20" fill="#2a1240"/>
<rect x="338.00" y="259.60" width="15.28" height="4.20" fill="#33115a"/>
<rect x="352.68" y="259.60" width="15.28" height="4.20" fill="#2a1240"/>
<rect x="367.36" y="259.60" width="15.28" height="4.20" fill="#33115a"/>
<rect x="382.03" y="259.60" width="44.63" height="4.20" fill="#2a1240"/>
<rect x="426.06" y="259.60" width="15.28" height="4.20" fill="#33115a"/>
<rect x="440.74" y="259.60" width="59.31" height="4.20" fill="#2a1240"/>
<rect x="499.45" y="259.60" width="15.28" height="4.20" fill="#181818"/>
<rect x="514.12" y="259.60" width="15.28" height="4.20" fill="#2a1240"/>
<rect x="528.80" y="259.60" width="15.28" height="4.20" fill="#420a72"/>
<rect x="543.48" y="259.60" width="15.28" height="4.20" fill="#33115a"/>
<rect x="558.16" y="259.60" width="15.28" height="4.20" fill="#2a1240"/>
<rect x="572.83" y="259.60" width="15.28" height="4.20" fill="#181818"/>
<rect x="587.51" y="259.60" width="29.95" height="4.20" fill="#33115a"/>
<rect x="616.86" y="259.60" width="29.95" height="4.20" fill="#2a1240"/>
<rect x="646.22" y="259.60" width="15.28" height="4.20" fill="#050505"/>
<rect x="660.89" y="259.60" width="15.28" height="4.20" fill="#181818"/>
<rect x="675.57" y="259.60" width="73.98" height="4.20" fill="#2a1240"/>
<rect x="748.96" y="259.60" width="15.28" height="4.20" fill="#050505"/>
<rect x="763.63" y="259.60" width="15.28" height="4.20" fill="#2a1240"/>
<rect x="778.31" y="259.60" width="15.28" height="4.20" fill="#33115a"/>
<rect x="792.99" y="259.60" width="29.95" height="4.20" fill="#2a1240"/>
<rect x="822.34" y="259.60" width="15.28" height="4.20" fill="#181818"/>
<rect x="837.02" y="259.60" width="29.95" height="4.20" fill="#2a1240"/>
<rect x="866.37" y="259.60" width="15.28" height="4.20" fill="#33115a"/>
<rect x="881.05" y="259.60" width="29.95" height="4.20" fill="#2a1240"/>
<rect x="910.40" y="259.60" width="15.28" height="4.20" fill="#050505"/>
<rect x="925.08" y="259.60" width="15.28" height="4.20" fill="#2a1240"/>
<rect x="939.76" y="259.60" width="15.28" height="4.20" fill="#33115a"/>
<rect x="954.43" y="259.60" width="29.95" height="4.20" fill="#2a1240"/>
<rect x="983.79" y="259.60" width="15.28" height="4.20" fill="#33115a"/>
<rect x="998.47" y="259.60" width="15.28" height="4.20" fill="#2a1240"/>
<rect x="1013.14" y="259.60" width="15.28" height="4.20" fill="#050505"/>
<rect x="1027.82" y="259.60" width="15.28" height="4.20" fill="#181818"/>
<rect x="1042.50" y="259.60" width="14.60" height="4.20" fill="#2a1240"/>
<rect x="147.20" y="272.40" width="15.28" height="4.20" fill="#181818"/>
<rect x="161.88" y="272.40" width="15.28" height="4.20" fill="#231a2d"/>
<rect x="176.55" y="272.40" width="15.28" height="4.20" fill="#181818"/>
<rect x="191.23" y="272.40" width="15.28" height="4.20" fill="#231a2d"/>
<rect x="205.91" y="272.40" width="15.28" height="4.20" fill="#181818"/>
<rect x="220.58" y="272.40" width="15.28" height="4.20" fill="#231a2d"/>
<rect x="235.26" y="272.40" width="15.28" height="4.20" fill="#181818"/>
<rect x="249.94" y="272.40" width="15.28" height="4.20" fill="#231a2d"/>
<rect x="264.62" y="272.40" width="44.63" height="4.20" fill="#181818"/>
<rect x="308.65" y="272.40" width="15.28" height="4.20" fill="#231a2d"/>
<rect x="323.32" y="272.40" width="15.28" height="4.20" fill="#181818"/>
<rect x="338.00" y="272.40" width="15.28" height="4.20" fill="#231a2d"/>
<rect x="352.68" y="272.40" width="44.63" height="4.20" fill="#181818"/>
<rect x="396.71" y="272.40" width="15.28" height="4.20" fill="#231a2d"/>
<rect x="411.39" y="272.40" width="44.63" height="4.20" fill="#181818"/>
<rect x="455.42" y="272.40" width="44.63" height="4.20" fill="#231a2d"/>
<rect x="499.45" y="272.40" width="15.28" height="4.20" fill="#181818"/>
<rect x="514.12" y="272.40" width="29.95" height="4.20" fill="#231a2d"/>
<rect x="543.48" y="272.40" width="29.95" height="4.20" fill="#181818"/>
<rect x="572.83" y="272.40" width="29.95" height="4.20" fill="#231a2d"/>
<rect x="602.19" y="272.40" width="15.28" height="4.20" fill="#181818"/>
<rect x="616.86" y="272.40" width="15.28" height="4.20" fill="#231a2d"/>
<rect x="631.54" y="272.40" width="15.28" height="4.20" fill="#181818"/>
<rect x="646.22" y="272.40" width="29.95" height="4.20" fill="#231a2d"/>
<rect x="675.57" y="272.40" width="44.63" height="4.20" fill="#181818"/>
<rect x="719.60" y="272.40" width="15.28" height="4.20" fill="#231a2d"/>
<rect x="734.28" y="272.40" width="15.28" height="4.20" fill="#181818"/>
<rect x="748.96" y="272.40" width="15.28" height="4.20" fill="#231a2d"/>
<rect x="763.63" y="272.40" width="44.63" height="4.20" fill="#181818"/>
<rect x="807.66" y="272.40" width="15.28" height="4.20" fill="#231a2d"/>
<rect x="822.34" y="272.40" width="15.28" height="4.20" fill="#181818"/>
<rect x="837.02" y="272.40" width="15.28" height="4.20" fill="#231a2d"/>
<rect x="851.70" y="272.40" width="15.28" height="4.20" fill="#181818"/>
<rect x="866.37" y="272.40" width="15.28" height="4.20" fill="#231a2d"/>
<rect x="881.05" y="272.40" width="44.63" height="4.20" fill="#181818"/>
<rect x="925.08" y="272.40" width="15.28" height="4.20" fill="#231a2d"/>
<rect x="939.76" y="272.40" width="73.98" height="4.20" fill="#181818"/>
<rect x="1013.14" y="272.40" width="29.95" height="4.20" fill="#231a2d"/>
<rect x="1042.50" y="272.40" width="14.60" height="4.20" fill="#181818"/>
<rect x="147.20" y="329.40" width="909.90" height="4.10" fill="#181818"/>
<rect x="147.20" y="337.50" width="59.31" height="4.10" fill="#181818"/>
<rect x="205.91" y="337.50" width="15.28" height="4.10" fill="#231a2d"/>
<rect x="220.58" y="337.50" width="44.63" height="4.10" fill="#181818"/>
<rect x="264.62" y="337.50" width="15.28" height="4.10" fill="#231a2d"/>
<rect x="279.29" y="337.50" width="15.28" height="4.10" fill="#181818"/>
<rect x="293.97" y="337.50" width="15.28" height="4.10" fill="#231a2d"/>
<rect x="308.65" y="337.50" width="88.66" height="4.10" fill="#181818"/>
<rect x="396.71" y="337.50" width="15.28" height="4.10" fill="#231a2d"/>
<rect x="411.39" y="337.50" width="59.31" height="4.10" fill="#181818"/>
<rect x="470.09" y="337.50" width="15.28" height="4.10" fill="#231a2d"/>
<rect x="484.77" y="337.50" width="73.98" height="4.10" fill="#181818"/>
<rect x="558.16" y="337.50" width="15.28" height="4.10" fill="#231a2d"/>
<rect x="572.83" y="337.50" width="88.66" height="4.10" fill="#181818"/>
<rect x="660.89" y="337.50" width="15.28" height="4.10" fill="#231a2d"/>
<rect x="675.57" y="337.50" width="88.66" height="4.10" fill="#181818"/>
<rect x="763.63" y="337.50" width="15.28" height="4.10" fill="#231a2d"/>
<rect x="778.31" y="337.50" width="103.34" height="4.10" fill="#181818"/>
<rect x="881.05" y="337.50" width="15.28" height="4.10" fill="#231a2d"/>
<rect x="895.73" y="337.50" width="103.34" height="4.10" fill="#181818"/>
<rect x="998.47" y="337.50" width="29.95" height="4.10" fill="#231a2d"/>
<rect x="1027.82" y="337.50" width="29.28" height="4.10" fill="#181818"/>
<rect x="147.20" y="398.20" width="15.28" height="5.10" fill="#f3cf3e"/>
<rect x="161.88" y="398.20" width="15.28" height="5.10" fill="#cc6640"/>
<rect x="176.55" y="398.20" width="14.68" height="5.10" fill="#e07f3c"/>
<rect x="205.91" y="398.20" width="15.28" height="5.10" fill="#f6ea52"/>
<rect x="220.58" y="398.20" width="14.68" height="5.10" fill="#6a0679"/>
<rect x="249.94" y="398.20" width="15.28" height="5.10" fill="#6a0679"/>
<rect x="264.62" y="398.20" width="15.28" height="5.10" fill="#e07f3c"/>
<rect x="279.29" y="398.20" width="15.28" height="5.10" fill="#c74e4c"/>
<rect x="293.97" y="398.20" width="15.28" height="5.10" fill="#9b1268"/>
<rect x="308.65" y="398.20" width="15.28" height="5.10" fill="#b12857"/>
<rect x="323.32" y="398.20" width="29.95" height="5.10" fill="#e07f3c"/>
<rect x="352.68" y="398.20" width="15.28" height="5.10" fill="#f3cf3e"/>
<rect x="367.36" y="398.20" width="15.28" height="5.10" fill="#eca23a"/>
<rect x="382.03" y="398.20" width="29.35" height="5.10" fill="#f3cf3e"/>
<rect x="426.06" y="398.20" width="15.28" height="5.10" fill="#c74e4c"/>
<rect x="440.74" y="398.20" width="29.95" height="5.10" fill="#e07f3c"/>
<rect x="470.09" y="398.20" width="14.68" height="5.10" fill="#c74e4c"/>
<rect x="499.45" y="398.20" width="15.28" height="5.10" fill="#c74e4c"/>
<rect x="514.12" y="398.20" width="29.95" height="5.10" fill="#e07f3c"/>
<rect x="543.48" y="398.20" width="14.68" height="5.10" fill="#c74e4c"/>
<rect x="572.83" y="398.20" width="15.28" height="5.10" fill="#e07f3c"/>
<rect x="587.51" y="398.20" width="15.28" height="5.10" fill="#f3cf3e"/>
<rect x="602.19" y="398.20" width="29.95" height="5.10" fill="#c74e4c"/>
<rect x="631.54" y="398.20" width="29.95" height="5.10" fill="#e07f3c"/>
<rect x="660.89" y="398.20" width="15.28" height="5.10" fill="#c74e4c"/>
<rect x="675.57" y="398.20" width="15.28" height="5.10" fill="#9b1268"/>
<rect x="690.25" y="398.20" width="14.68" height="5.10" fill="#f6ea52"/>
<rect x="719.60" y="398.20" width="15.28" height="5.10" fill="#c74e4c"/>
<rect x="734.28" y="398.20" width="15.28" height="5.10" fill="#e07f3c"/>
<rect x="748.96" y="398.20" width="15.28" height="5.10" fill="#f3cf3e"/>
<rect x="763.63" y="398.20" width="14.68" height="5.10" fill="#c74e4c"/>
<rect x="792.99" y="398.20" width="15.28" height="5.10" fill="#e07f3c"/>
<rect x="807.66" y="398.20" width="15.28" height="5.10" fill="#c74e4c"/>
<rect x="822.34" y="398.20" width="15.28" height="5.10" fill="#9b1268"/>
<rect x="837.02" y="398.20" width="15.28" height="5.10" fill="#e07f3c"/>
<rect x="851.70" y="398.20" width="15.28" height="5.10" fill="#c74e4c"/>
<rect x="866.37" y="398.20" width="14.68" height="5.10" fill="#f3cf3e"/>
<rect x="895.73" y="398.20" width="15.28" height="5.10" fill="#e07f3c"/>
<rect x="910.40" y="398.20" width="15.28" height="5.10" fill="#eca23a"/>
<rect x="925.08" y="398.20" width="14.68" height="5.10" fill="#c74e4c"/>
<rect x="954.43" y="398.20" width="15.28" height="5.10" fill="#e07f3c"/>
<rect x="969.11" y="398.20" width="15.28" height="5.10" fill="#c74e4c"/>
<rect x="983.79" y="398.20" width="14.68" height="5.10" fill="#f1efa2"/>
<rect x="1013.14" y="398.20" width="15.28" height="5.10" fill="#c74e4c"/>
<rect x="1027.82" y="398.20" width="29.28" height="5.10" fill="#9b1268"/>
<rect x="147.20" y="402.60" width="15.28" height="5.10" fill="#f3cf3e"/>
<rect x="161.88" y="402.60" width="15.28" height="5.10" fill="#a6195f"/>
<rect x="176.55" y="402.60" width="15.28" height="5.10" fill="#e07f3c"/>
<rect x="191.23" y="402.60" width="29.95" height="5.10" fill="#050505"/>
<rect x="220.58" y="402.60" width="15.28" height="5.10" fill="#181818"/>
<rect x="235.26" y="402.60" width="15.28" height="5.10" fill="#9b1268"/>
<rect x="249.94" y="402.60" width="15.28" height="5.10" fill="#e07f3c"/>
<rect x="264.62" y="402.60" width="15.28" height="5.10" fill="#181818"/>
<rect x="279.29" y="402.60" width="15.28" height="5.10" fill="#050505"/>
<rect x="293.97" y="402.60" width="29.95" height="5.10" fill="#181818"/>
<rect x="323.32" y="402.60" width="15.28" height="5.10" fill="#9b1268"/>
<rect x="338.00" y="402.60" width="15.28" height="5.10" fill="#e07f3c"/>
<rect x="352.68" y="402.60" width="15.28" height="5.10" fill="#f3cf3e"/>
<rect x="367.36" y="402.60" width="15.28" height="5.10" fill="#050505"/>
<rect x="382.03" y="402.60" width="15.28" height="5.10" fill="#6a0679"/>
<rect x="396.71" y="402.60" width="15.28" height="5.10" fill="#e07f3c"/>
<rect x="411.39" y="402.60" width="15.28" height="5.10" fill="#9b1268"/>
<rect x="426.06" y="402.60" width="15.28" height="5.10" fill="#eca23a"/>
<rect x="440.74" y="402.60" width="15.28" height="5.10" fill="#e07f3c"/>
<rect x="455.42" y="402.60" width="29.95" height="5.10" fill="#181818"/>
<rect x="484.77" y="402.60" width="15.28" height="5.10" fill="#f3cf3e"/>
<rect x="499.45" y="402.60" width="29.95" height="5.10" fill="#050505"/>
<rect x="528.80" y="402.60" width="15.28" height="5.10" fill="#181818"/>
<rect x="543.48" y="402.60" width="29.95" height="5.10" fill="#050505"/>
<rect x="572.83" y="402.60" width="15.28" height="5.10" fill="#f3cf3e"/>
<rect x="587.51" y="402.60" width="15.28" height="5.10" fill="#181818"/>
<rect x="602.19" y="402.60" width="15.28" height="5.10" fill="#050505"/>
<rect x="616.86" y="402.60" width="15.28" height="5.10" fill="#181818"/>
<rect x="631.54" y="402.60" width="15.28" height="5.10" fill="#050505"/>
<rect x="646.22" y="402.60" width="15.28" height="5.10" fill="#f3cf3e"/>
<rect x="660.89" y="402.60" width="15.28" height="5.10" fill="#181818"/>
<rect x="675.57" y="402.60" width="15.28" height="5.10" fill="#050505"/>
<rect x="690.25" y="402.60" width="15.28" height="5.10" fill="#f6ea52"/>
<rect x="704.93" y="402.60" width="15.28" height="5.10" fill="#050505"/>
<rect x="719.60" y="402.60" width="15.28" height="5.10" fill="#181818"/>
<rect x="734.28" y="402.60" width="29.95" height="5.10" fill="#050505"/>
<rect x="763.63" y="402.60" width="15.28" height="5.10" fill="#f3cf3e"/>
<rect x="778.31" y="402.60" width="15.28" height="5.10" fill="#181818"/>
<rect x="792.99" y="402.60" width="29.95" height="5.10" fill="#050505"/>
<rect x="822.34" y="402.60" width="15.28" height="5.10" fill="#181818"/>
<rect x="837.02" y="402.60" width="29.95" height="5.10" fill="#050505"/>
<rect x="866.37" y="402.60" width="15.28" height="5.10" fill="#f3cf3e"/>
<rect x="881.05" y="402.60" width="15.28" height="5.10" fill="#181818"/>
<rect x="895.73" y="402.60" width="29.95" height="5.10" fill="#050505"/>
<rect x="925.08" y="402.60" width="15.28" height="5.10" fill="#181818"/>
<rect x="939.76" y="402.60" width="15.28" height="5.10" fill="#050505"/>
<rect x="954.43" y="402.60" width="15.28" height="5.10" fill="#f3cf3e"/>
<rect x="969.11" y="402.60" width="15.28" height="5.10" fill="#050505"/>
<rect x="983.79" y="402.60" width="15.28" height="5.10" fill="#181818"/>
<rect x="998.47" y="402.60" width="15.28" height="5.10" fill="#050505"/>
<rect x="1013.14" y="402.60" width="15.28" height="5.10" fill="#181818"/>
<rect x="1027.82" y="402.60" width="15.28" height="5.10" fill="#050505"/>
<rect x="1042.50" y="402.60" width="14.60" height="5.10" fill="#181818"/>
<rect x="147.20" y="407.00" width="15.28" height="5.30" fill="#eca23a"/>
<rect x="161.88" y="407.00" width="44.63" height="5.30" fill="#050505"/>
<rect x="205.91" y="407.00" width="15.28" height="5.30" fill="#9b1268"/>
<rect x="220.58" y="407.00" width="15.28" height="5.30" fill="#86097a"/>
<rect x="235.26" y="407.00" width="132.69" height="5.30" fill="#050505"/>
<rect x="367.36" y="407.00" width="15.28" height="5.30" fill="#f3cf3e"/>
<rect x="382.03" y="407.00" width="15.28" height="5.30" fill="#050505"/>
<rect x="396.71" y="407.00" width="15.28" height="5.30" fill="#9b1268"/>
<rect x="411.39" y="407.00" width="15.28" height="5.30" fill="#86097a"/>
<rect x="426.06" y="407.00" width="15.28" height="5.30" fill="#f3cf3e"/>
<rect x="440.74" y="407.00" width="147.37" height="5.30" fill="#050505"/>
<rect x="587.51" y="407.00" width="15.28" height="5.30" fill="#f3cf3e"/>
<rect x="602.19" y="407.00" width="88.66" height="5.30" fill="#050505"/>
<rect x="690.25" y="407.00" width="15.28" height="5.30" fill="#f3cf3e"/>
<rect x="704.93" y="407.00" width="279.46" height="5.30" fill="#050505"/>
<rect x="983.79" y="407.00" width="15.28" height="5.30" fill="#f3cf3e"/>
<rect x="998.47" y="407.00" width="15.28" height="5.30" fill="#050505"/>
<rect x="1013.14" y="407.00" width="15.28" height="5.30" fill="#9b1268"/>
<rect x="1027.82" y="407.00" width="15.28" height="5.30" fill="#050505"/>
<rect x="1042.50" y="407.00" width="14.60" height="5.30" fill="#6a0679"/>
<rect x="147.20" y="411.60" width="15.28" height="4.30" fill="#eca23a"/>
<rect x="161.88" y="411.60" width="191.40" height="4.30" fill="#050505"/>
<rect x="352.68" y="411.60" width="15.28" height="4.30" fill="#2a1240"/>
<rect x="367.36" y="411.60" width="15.28" height="4.30" fill="#181818"/>
<rect x="382.03" y="411.60" width="617.03" height="4.30" fill="#050505"/>
<rect x="998.47" y="411.60" width="15.28" height="4.30" fill="#f6ea52"/>
<rect x="1013.14" y="411.60" width="15.28" height="4.30" fill="#6a0679"/>
<rect x="1027.82" y="411.60" width="29.28" height="4.30" fill="#050505"/>
<rect x="147.20" y="415.20" width="15.28" height="4.70" fill="#eca23a"/>
<rect x="161.88" y="415.20" width="15.28" height="4.70" fill="#6a0679"/>
<rect x="176.55" y="415.20" width="176.72" height="4.70" fill="#050505"/>
<rect x="352.68" y="415.20" width="15.28" height="4.70" fill="#b12857"/>
<rect x="367.36" y="415.20" width="15.28" height="4.70" fill="#f6ea52"/>
<rect x="382.03" y="415.20" width="15.28" height="4.70" fill="#86097a"/>
<rect x="396.71" y="415.20" width="29.95" height="4.70" fill="#050505"/>
<rect x="426.06" y="415.20" width="15.28" height="4.70" fill="#eca23a"/>
<rect x="440.74" y="415.20" width="73.98" height="4.70" fill="#050505"/>
<rect x="514.12" y="415.20" width="15.28" height="4.70" fill="#86097a"/>
<rect x="528.80" y="415.20" width="59.31" height="4.70" fill="#050505"/>
<rect x="587.51" y="415.20" width="15.28" height="4.70" fill="#eca23a"/>
<rect x="602.19" y="415.20" width="88.66" height="4.70" fill="#050505"/>
<rect x="690.25" y="415.20" width="29.95" height="4.70" fill="#eca23a"/>
<rect x="719.60" y="415.20" width="264.79" height="4.70" fill="#050505"/>
<rect x="983.79" y="415.20" width="15.28" height="4.70" fill="#f3cf3e"/>
<rect x="998.47" y="415.20" width="58.63" height="4.70" fill="#050505"/>
<rect x="264.62" y="554.50" width="14.68" height="4.10" fill="#181818"/>
<rect x="323.32" y="554.50" width="29.35" height="4.10" fill="#2a1240"/>
<rect x="367.36" y="554.50" width="14.68" height="4.10" fill="#f6ea52"/>
<rect x="572.83" y="554.50" width="15.28" height="4.10" fill="#181818"/>
<rect x="587.51" y="554.50" width="14.68" height="4.10" fill="#f6ea52"/>
<rect x="646.22" y="554.50" width="15.28" height="4.10" fill="#181818"/>
<rect x="660.89" y="554.50" width="14.68" height="4.10" fill="#f6ea52"/>
<rect x="690.25" y="554.50" width="29.35" height="4.10" fill="#f6ea52"/>
<rect x="851.70" y="554.50" width="14.68" height="4.10" fill="#f6ea52"/>
<rect x="147.20" y="589.40" width="15.28" height="4.80" fill="#9b1268"/>
<rect x="161.88" y="589.40" width="58.71" height="4.80" fill="#a6195f"/>
<rect x="235.26" y="589.40" width="58.71" height="4.80" fill="#a6195f"/>
<rect x="308.65" y="589.40" width="15.28" height="4.80" fill="#a6195f"/>
<rect x="323.32" y="589.40" width="15.28" height="4.80" fill="#c74e4c"/>
<rect x="338.00" y="589.40" width="14.68" height="4.80" fill="#a6195f"/>
<rect x="367.36" y="589.40" width="15.28" height="4.80" fill="#c74e4c"/>
<rect x="382.03" y="589.40" width="14.68" height="4.80" fill="#e07f3c"/>
<rect x="411.39" y="589.40" width="15.28" height="4.80" fill="#b12857"/>
<rect x="426.06" y="589.40" width="14.68" height="4.80" fill="#9b1268"/>
<rect x="455.42" y="589.40" width="15.28" height="4.80" fill="#9b1268"/>
<rect x="470.09" y="589.40" width="29.35" height="4.80" fill="#c74e4c"/>
<rect x="514.12" y="589.40" width="15.28" height="4.80" fill="#6a0679"/>
<rect x="528.80" y="589.40" width="15.28" height="4.80" fill="#a6195f"/>
<rect x="543.48" y="589.40" width="14.68" height="4.80" fill="#c74e4c"/>
<rect x="572.83" y="589.40" width="15.28" height="4.80" fill="#6a0679"/>
<rect x="587.51" y="589.40" width="15.28" height="4.80" fill="#c74e4c"/>
<rect x="602.19" y="589.40" width="44.03" height="4.80" fill="#a6195f"/>
<rect x="660.89" y="589.40" width="15.28" height="4.80" fill="#a6195f"/>
<rect x="675.57" y="589.40" width="15.28" height="4.80" fill="#9b1268"/>
<rect x="690.25" y="589.40" width="14.68" height="4.80" fill="#c74e4c"/>
<rect x="719.60" y="589.40" width="15.28" height="4.80" fill="#6a0679"/>
<rect x="734.28" y="589.40" width="15.28" height="4.80" fill="#c74e4c"/>
<rect x="748.96" y="589.40" width="14.68" height="4.80" fill="#b12857"/>
<rect x="778.31" y="589.40" width="15.28" height="4.80" fill="#b12857"/>
<rect x="792.99" y="589.40" width="14.68" height="4.80" fill="#a6195f"/>
<rect x="822.34" y="589.40" width="15.28" height="4.80" fill="#420a72"/>
<rect x="837.02" y="589.40" width="15.28" height="4.80" fill="#9b1268"/>
<rect x="851.70" y="589.40" width="15.28" height="4.80" fill="#c74e4c"/>
<rect x="866.37" y="589.40" width="15.28" height="4.80" fill="#6a0679"/>
<rect x="881.05" y="589.40" width="15.28" height="4.80" fill="#b12857"/>
<rect x="895.73" y="589.40" width="14.68" height="4.80" fill="#a6195f"/>
<rect x="925.08" y="589.40" width="15.28" height="4.80" fill="#9b1268"/>
<rect x="939.76" y="589.40" width="15.28" height="4.80" fill="#c74e4c"/>
<rect x="954.43" y="589.40" width="15.28" height="4.80" fill="#9b1268"/>
<rect x="969.11" y="589.40" width="15.28" height="4.80" fill="#6a0679"/>
<rect x="983.79" y="589.40" width="15.28" height="4.80" fill="#e07f3c"/>
<rect x="998.47" y="589.40" width="14.68" height="4.80" fill="#b12857"/>
<rect x="1027.82" y="589.40" width="15.28" height="4.80" fill="#420a72"/>
<rect x="1042.50" y="589.40" width="14.60" height="4.80" fill="#b12857"/>
<rect x="147.20" y="593.50" width="15.28" height="4.50" fill="#420a72"/>
<rect x="161.88" y="593.50" width="15.28" height="4.50" fill="#6a0679"/>
<rect x="176.55" y="593.50" width="15.28" height="4.50" fill="#86097a"/>
<rect x="191.23" y="593.50" width="15.28" height="4.50" fill="#cc6640"/>
<rect x="205.91" y="593.50" width="15.28" height="4.50" fill="#6a0679"/>
<rect x="220.58" y="593.50" width="15.28" height="4.50" fill="#050505"/>
<rect x="235.26" y="593.50" width="29.95" height="4.50" fill="#9b1268"/>
<rect x="264.62" y="593.50" width="15.28" height="4.50" fill="#420a72"/>
<rect x="279.29" y="593.50" width="15.28" height="4.50" fill="#a6195f"/>
<rect x="293.97" y="593.50" width="15.28" height="4.50" fill="#050505"/>
<rect x="308.65" y="593.50" width="15.28" height="4.50" fill="#6a0679"/>
<rect x="323.32" y="593.50" width="15.28" height="4.50" fill="#a6195f"/>
<rect x="338.00" y="593.50" width="15.28" height="4.50" fill="#b12857"/>
<rect x="352.68" y="593.50" width="15.28" height="4.50" fill="#eca23a"/>
<rect x="367.36" y="593.50" width="15.28" height="4.50" fill="#f3cf3e"/>
<rect x="382.03" y="593.50" width="15.28" height="4.50" fill="#9b1268"/>
<rect x="396.71" y="593.50" width="15.28" height="4.50" fill="#c74e4c"/>
<rect x="411.39" y="593.50" width="15.28" height="4.50" fill="#050505"/>
<rect x="426.06" y="593.50" width="15.28" height="4.50" fill="#2a1240"/>
<rect x="440.74" y="593.50" width="29.95" height="4.50" fill="#420a72"/>
<rect x="470.09" y="593.50" width="15.28" height="4.50" fill="#050505"/>
<rect x="484.77" y="593.50" width="15.28" height="4.50" fill="#eca23a"/>
<rect x="499.45" y="593.50" width="15.28" height="4.50" fill="#2a1240"/>
<rect x="514.12" y="593.50" width="29.95" height="4.50" fill="#420a72"/>
<rect x="543.48" y="593.50" width="15.28" height="4.50" fill="#050505"/>
<rect x="558.16" y="593.50" width="29.95" height="4.50" fill="#420a72"/>
<rect x="587.51" y="593.50" width="15.28" height="4.50" fill="#050505"/>
<rect x="602.19" y="593.50" width="44.63" height="4.50" fill="#420a72"/>
<rect x="646.22" y="593.50" width="15.28" height="4.50" fill="#050505"/>
<rect x="660.89" y="593.50" width="15.28" height="4.50" fill="#eca23a"/>
<rect x="675.57" y="593.50" width="15.28" height="4.50" fill="#420a72"/>
<rect x="690.25" y="593.50" width="15.28" height="4.50" fill="#eca23a"/>
<rect x="704.93" y="593.50" width="15.28" height="4.50" fill="#050505"/>
<rect x="719.60" y="593.50" width="15.28" height="4.50" fill="#2a1240"/>
<rect x="734.28" y="593.50" width="15.28" height="4.50" fill="#eca23a"/>
<rect x="748.96" y="593.50" width="15.28" height="4.50" fill="#2a1240"/>
<rect x="763.63" y="593.50" width="15.28" height="4.50" fill="#050505"/>
<rect x="778.31" y="593.50" width="15.28" height="4.50" fill="#eca23a"/>
<rect x="792.99" y="593.50" width="15.28" height="4.50" fill="#420a72"/>
<rect x="807.66" y="593.50" width="15.28" height="4.50" fill="#050505"/>
<rect x="822.34" y="593.50" width="29.95" height="4.50" fill="#6a0679"/>
<rect x="851.70" y="593.50" width="15.28" height="4.50" fill="#eca23a"/>
<rect x="866.37" y="593.50" width="15.28" height="4.50" fill="#6a0679"/>
<rect x="881.05" y="593.50" width="15.28" height="4.50" fill="#eca23a"/>
<rect x="895.73" y="593.50" width="15.28" height="4.50" fill="#6a0679"/>
<rect x="910.40" y="593.50" width="15.28" height="4.50" fill="#050505"/>
<rect x="925.08" y="593.50" width="15.28" height="4.50" fill="#6a0679"/>
<rect x="939.76" y="593.50" width="15.28" height="4.50" fill="#eca23a"/>
<rect x="954.43" y="593.50" width="15.28" height="4.50" fill="#6a0679"/>
<rect x="969.11" y="593.50" width="15.28" height="4.50" fill="#9b1268"/>
<rect x="983.79" y="593.50" width="15.28" height="4.50" fill="#f6ea52"/>
<rect x="998.47" y="593.50" width="15.28" height="4.50" fill="#6a0679"/>
<rect x="1013.14" y="593.50" width="15.28" height="4.50" fill="#050505"/>
<rect x="1027.82" y="593.50" width="29.28" height="4.50" fill="#e07f3c"/>
<rect x="147.20" y="602.00" width="14.68" height="9.70" fill="#181818"/>
<rect x="205.91" y="602.00" width="14.68" height="9.70" fill="#181818"/>
<rect x="279.29" y="602.00" width="14.68" height="9.70" fill="#181818"/>
<rect x="352.68" y="602.00" width="14.68" height="9.70" fill="#181818"/>
<rect x="426.06" y="602.00" width="14.68" height="9.70" fill="#181818"/>
<rect x="499.45" y="602.00" width="14.68" height="9.70" fill="#181818"/>
<rect x="572.83" y="602.00" width="14.68" height="9.70" fill="#181818"/>
<rect x="646.22" y="602.00" width="14.68" height="9.70" fill="#181818"/>
<rect x="719.60" y="602.00" width="14.68" height="9.70" fill="#181818"/>
<rect x="792.99" y="602.00" width="14.68" height="9.70" fill="#181818"/>
<rect x="866.37" y="602.00" width="14.68" height="9.70" fill="#181818"/>
<rect x="939.76" y="602.00" width="14.68" height="9.70" fill="#181818"/>
<rect x="1013.14" y="602.00" width="14.68" height="9.70" fill="#181818"/>
<rect x="147.20" y="611.00" width="15.28" height="4.70" fill="#a6195f"/>
<rect x="161.88" y="611.00" width="15.28" height="4.70" fill="#b12857"/>
<rect x="176.55" y="611.00" width="15.28" height="4.70" fill="#e07f3c"/>
<rect x="191.23" y="611.00" width="29.95" height="4.70" fill="#f3cf3e"/>
<rect x="220.58" y="611.00" width="29.95" height="4.70" fill="#e07f3c"/>
<rect x="249.94" y="611.00" width="15.28" height="4.70" fill="#050505"/>
<rect x="264.62" y="611.00" width="15.28" height="4.70" fill="#2a1240"/>
<rect x="279.29" y="611.00" width="15.28" height="4.70" fill="#f6ea52"/>
<rect x="293.97" y="611.00" width="15.28" height="4.70" fill="#050505"/>
<rect x="308.65" y="611.00" width="15.28" height="4.70" fill="#6a0679"/>
<rect x="323.32" y="611.00" width="29.95" height="4.70" fill="#e07f3c"/>
<rect x="352.68" y="611.00" width="15.28" height="4.70" fill="#050505"/>
<rect x="367.36" y="611.00" width="15.28" height="4.70" fill="#eca23a"/>
<rect x="382.03" y="611.00" width="15.28" height="4.70" fill="#e07f3c"/>
<rect x="396.71" y="611.00" width="15.28" height="4.70" fill="#eca23a"/>
<rect x="411.39" y="611.00" width="15.28" height="4.70" fill="#050505"/>
<rect x="426.06" y="611.00" width="15.28" height="4.70" fill="#eca23a"/>
<rect x="440.74" y="611.00" width="29.95" height="4.70" fill="#e07f3c"/>
<rect x="470.09" y="611.00" width="15.28" height="4.70" fill="#050505"/>
<rect x="484.77" y="611.00" width="15.28" height="4.70" fill="#e07f3c"/>
<rect x="499.45" y="611.00" width="15.28" height="4.70" fill="#f6ea52"/>
<rect x="514.12" y="611.00" width="44.63" height="4.70" fill="#e07f3c"/>
<rect x="558.16" y="611.00" width="15.28" height="4.70" fill="#050505"/>
<rect x="572.83" y="611.00" width="29.95" height="4.70" fill="#eca23a"/>
<rect x="602.19" y="611.00" width="29.95" height="4.70" fill="#e07f3c"/>
<rect x="631.54" y="611.00" width="15.28" height="4.70" fill="#f3cf3e"/>
<rect x="646.22" y="611.00" width="15.28" height="4.70" fill="#050505"/>
<rect x="660.89" y="611.00" width="15.28" height="4.70" fill="#c74e4c"/>
<rect x="675.57" y="611.00" width="15.28" height="4.70" fill="#e07f3c"/>
<rect x="690.25" y="611.00" width="15.28" height="4.70" fill="#050505"/>
<rect x="704.93" y="611.00" width="15.28" height="4.70" fill="#f6ea52"/>
<rect x="719.60" y="611.00" width="44.63" height="4.70" fill="#f3cf3e"/>
<rect x="763.63" y="611.00" width="15.28" height="4.70" fill="#eca23a"/>
<rect x="778.31" y="611.00" width="15.28" height="4.70" fill="#f3cf3e"/>
<rect x="792.99" y="611.00" width="15.28" height="4.70" fill="#2a1240"/>
<rect x="807.66" y="611.00" width="15.28" height="4.70" fill="#eca23a"/>
<rect x="822.34" y="611.00" width="29.95" height="4.70" fill="#420a72"/>
<rect x="851.70" y="611.00" width="15.28" height="4.70" fill="#050505"/>
<rect x="866.37" y="611.00" width="15.28" height="4.70" fill="#f3cf3e"/>
<rect x="881.05" y="611.00" width="15.28" height="4.70" fill="#c74e4c"/>
<rect x="895.73" y="611.00" width="15.28" height="4.70" fill="#6a0679"/>
<rect x="910.40" y="611.00" width="15.28" height="4.70" fill="#420a72"/>
<rect x="925.08" y="611.00" width="15.28" height="4.70" fill="#050505"/>
<rect x="939.76" y="611.00" width="15.28" height="4.70" fill="#c74e4c"/>
<rect x="954.43" y="611.00" width="15.28" height="4.70" fill="#420a72"/>
<rect x="969.11" y="611.00" width="15.28" height="4.70" fill="#050505"/>
<rect x="983.79" y="611.00" width="15.28" height="4.70" fill="#e07f3c"/>
<rect x="998.47" y="611.00" width="15.28" height="4.70" fill="#6a0679"/>
<rect x="1013.14" y="611.00" width="15.28" height="4.70" fill="#f3cf3e"/>
<rect x="1027.82" y="611.00" width="29.28" height="4.70" fill="#420a72"/>
<rect x="147.20" y="615.00" width="15.28" height="5.30" fill="#6a0679"/>
<rect x="161.88" y="615.00" width="15.28" height="5.30" fill="#9b1268"/>
<rect x="176.55" y="615.00" width="15.28" height="5.30" fill="#050505"/>
<rect x="191.23" y="615.00" width="15.28" height="5.30" fill="#86097a"/>
<rect x="205.91" y="615.00" width="29.95" height="5.30" fill="#9b1268"/>
<rect x="235.26" y="615.00" width="15.28" height="5.30" fill="#86097a"/>
<rect x="249.94" y="615.00" width="29.95" height="5.30" fill="#9b1268"/>
<rect x="279.29" y="615.00" width="15.28" height="5.30" fill="#86097a"/>
<rect x="293.97" y="615.00" width="29.95" height="5.30" fill="#9b1268"/>
<rect x="323.32" y="615.00" width="15.28" height="5.30" fill="#050505"/>
<rect x="338.00" y="615.00" width="15.28" height="5.30" fill="#420a72"/>
<rect x="352.68" y="615.00" width="15.28" height="5.30" fill="#6a0679"/>
<rect x="367.36" y="615.00" width="15.28" height="5.30" fill="#9b1268"/>
<rect x="382.03" y="615.00" width="15.28" height="5.30" fill="#a6195f"/>
<rect x="396.71" y="615.00" width="15.28" height="5.30" fill="#6a0679"/>
<rect x="411.39" y="615.00" width="15.28" height="5.30" fill="#9b1268"/>
<rect x="426.06" y="615.00" width="29.95" height="5.30" fill="#a6195f"/>
<rect x="455.42" y="615.00" width="15.28" height="5.30" fill="#6a0679"/>
<rect x="470.09" y="615.00" width="29.95" height="5.30" fill="#a6195f"/>
<rect x="499.45" y="615.00" width="15.28" height="5.30" fill="#050505"/>
<rect x="514.12" y="615.00" width="15.28" height="5.30" fill="#181818"/>
<rect x="528.80" y="615.00" width="29.95" height="5.30" fill="#9b1268"/>
<rect x="558.16" y="615.00" width="15.28" height="5.30" fill="#181818"/>
<rect x="572.83" y="615.00" width="88.66" height="5.30" fill="#9b1268"/>
<rect x="660.89" y="615.00" width="15.28" height="5.30" fill="#050505"/>
<rect x="675.57" y="615.00" width="15.28" height="5.30" fill="#9b1268"/>
<rect x="690.25" y="615.00" width="15.28" height="5.30" fill="#6a0679"/>
<rect x="704.93" y="615.00" width="15.28" height="5.30" fill="#050505"/>
<rect x="719.60" y="615.00" width="29.95" height="5.30" fill="#9b1268"/>
<rect x="748.96" y="615.00" width="15.28" height="5.30" fill="#420a72"/>
<rect x="763.63" y="615.00" width="15.28" height="5.30" fill="#050505"/>
<rect x="778.31" y="615.00" width="29.95" height="5.30" fill="#9b1268"/>
<rect x="807.66" y="615.00" width="29.95" height="5.30" fill="#181818"/>
<rect x="837.02" y="615.00" width="15.28" height="5.30" fill="#2a1240"/>
<rect x="851.70" y="615.00" width="205.40" height="5.30" fill="#231a2d"/>
<rect x="147.20" y="619.60" width="15.28" height="5.00" fill="#2a1240"/>
<rect x="161.88" y="619.60" width="59.31" height="5.00" fill="#33115a"/>
<rect x="220.58" y="619.60" width="15.28" height="5.00" fill="#050505"/>
<rect x="235.26" y="619.60" width="15.28" height="5.00" fill="#2a1240"/>
<rect x="249.94" y="619.60" width="44.63" height="5.00" fill="#33115a"/>
<rect x="293.97" y="619.60" width="15.28" height="5.00" fill="#050505"/>
<rect x="308.65" y="619.60" width="15.28" height="5.00" fill="#33115a"/>
<rect x="323.32" y="619.60" width="15.28" height="5.00" fill="#2a1240"/>
<rect x="338.00" y="619.60" width="29.95" height="5.00" fill="#33115a"/>
<rect x="367.36" y="619.60" width="15.28" height="5.00" fill="#050505"/>
<rect x="382.03" y="619.60" width="15.28" height="5.00" fill="#2a1240"/>
<rect x="396.71" y="619.60" width="29.95" height="5.00" fill="#33115a"/>
<rect x="426.06" y="619.60" width="15.28" height="5.00" fill="#050505"/>
<rect x="440.74" y="619.60" width="15.28" height="5.00" fill="#181818"/>
<rect x="455.42" y="619.60" width="15.28" height="5.00" fill="#33115a"/>
<rect x="470.09" y="619.60" width="15.28" height="5.00" fill="#2a1240"/>
<rect x="484.77" y="619.60" width="15.28" height="5.00" fill="#050505"/>
<rect x="499.45" y="619.60" width="29.95" height="5.00" fill="#33115a"/>
<rect x="528.80" y="619.60" width="15.28" height="5.00" fill="#2a1240"/>
<rect x="543.48" y="619.60" width="15.28" height="5.00" fill="#181818"/>
<rect x="558.16" y="619.60" width="15.28" height="5.00" fill="#2a1240"/>
<rect x="572.83" y="619.60" width="15.28" height="5.00" fill="#33115a"/>
<rect x="587.51" y="619.60" width="15.28" height="5.00" fill="#181818"/>
<rect x="602.19" y="619.60" width="44.63" height="5.00" fill="#33115a"/>
<rect x="646.22" y="619.60" width="15.28" height="5.00" fill="#050505"/>
<rect x="660.89" y="619.60" width="15.28" height="5.00" fill="#181818"/>
<rect x="675.57" y="619.60" width="29.95" height="5.00" fill="#33115a"/>
<rect x="704.93" y="619.60" width="15.28" height="5.00" fill="#181818"/>
<rect x="719.60" y="619.60" width="15.28" height="5.00" fill="#2a1240"/>
<rect x="734.28" y="619.60" width="15.28" height="5.00" fill="#33115a"/>
<rect x="748.96" y="619.60" width="15.28" height="5.00" fill="#050505"/>
<rect x="763.63" y="619.60" width="15.28" height="5.00" fill="#2a1240"/>
<rect x="778.31" y="619.60" width="59.31" height="5.00" fill="#33115a"/>
<rect x="837.02" y="619.60" width="15.28" height="5.00" fill="#050505"/>
<rect x="851.70" y="619.60" width="73.98" height="5.00" fill="#33115a"/>
<rect x="925.08" y="619.60" width="15.28" height="5.00" fill="#181818"/>
<rect x="939.76" y="619.60" width="15.28" height="5.00" fill="#33115a"/>
<rect x="954.43" y="619.60" width="15.28" height="5.00" fill="#2a1240"/>
<rect x="969.11" y="619.60" width="15.28" height="5.00" fill="#33115a"/>
<rect x="983.79" y="619.60" width="15.28" height="5.00" fill="#050505"/>
<rect x="998.47" y="619.60" width="15.28" height="5.00" fill="#2a1240"/>
<rect x="1013.14" y="619.60" width="15.28" height="5.00" fill="#33115a"/>
<rect x="1027.82" y="619.60" width="29.28" height="5.00" fill="#2a1240"/>
<rect x="147.20" y="623.90" width="909.90" height="4.10" fill="#181818"/>
<rect x="147.20" y="706.20" width="909.90" height="4.90" fill="#141414"/>
</g>
<g id="rbars">
<rect x="1086.70" y="112.30" width="10.00" height="3.80" fill="#333"/>
<rect x="1086.70" y="120.80" width="10.00" height="3.80" fill="#333"/>
<rect x="1091.70" y="125.30" width="5.00" height="3.80" fill="#333"/>
<rect x="1094.70" y="133.70" width="2.00" height="3.50" fill="#ddd"/>
<rect x="1094.70" y="137.70" width="2.00" height="4.50" fill="#777"/>
<rect x="1095.70" y="146.10" width="1.00" height="5.00" fill="#444"/>
<rect x="1090.90" y="225.10" width="5.80" height="3.80" fill="#333"/>
<rect x="1095.70" y="251.20" width="1.00" height="3.80" fill="#888"/>
<rect x="1095.70" y="255.40" width="1.00" height="3.40" fill="#888"/>
<rect x="1067.70" y="398.80" width="29.00" height="3.40" fill="#333"/>
<rect x="1085.70" y="403.20" width="11.00" height="3.30" fill="#333"/>
<rect x="1090.20" y="407.90" width="6.50" height="2.70" fill="#333"/>
<rect x="1095.70" y="412.30" width="1.00" height="2.30" fill="#555"/>
<rect x="1085.70" y="416.00" width="11.00" height="3.60" fill="#333"/>
<rect x="1086.90" y="554.90" width="9.80" height="3.40" fill="#333"/>
<rect x="1090.90" y="589.70" width="5.80" height="3.30" fill="#333"/>
<rect x="1089.40" y="594.00" width="7.30" height="3.40" fill="#333"/>
<rect x="1079.50" y="611.30" width="17.20" height="3.70" fill="#333"/>
<rect x="1093.90" y="615.80" width="2.80" height="3.00" fill="#333"/>
</g>
<g id="bars">
<rect x="147.70" y="744.70" width="13.48" height="10.20" fill="#333333"/>
<rect x="162.38" y="749.50" width="13.48" height="5.40" fill="#333333"/>
<rect x="177.05" y="748.70" width="13.48" height="6.20" fill="#333333"/>
<rect x="191.73" y="750.60" width="13.48" height="4.30" fill="#333333"/>
<rect x="206.41" y="747.90" width="13.48" height="7.00" fill="#333333"/>
<rect x="221.08" y="751.40" width="13.48" height="3.50" fill="#333333"/>
<rect x="235.76" y="750.60" width="13.48" height="4.30" fill="#333333"/>
<rect x="250.44" y="750.00" width="13.48" height="4.90" fill="#333333"/>
<rect x="265.12" y="750.00" width="13.48" height="4.90" fill="#333333"/>
<rect x="279.79" y="748.70" width="13.48" height="6.20" fill="#333333"/>
<rect x="294.47" y="753.30" width="13.48" height="1.60" fill="#333333"/>
<rect x="309.15" y="750.00" width="13.48" height="4.90" fill="#333333"/>
<rect x="323.82" y="747.90" width="13.48" height="7.00" fill="#333333"/>
<rect x="338.50" y="750.00" width="13.48" height="4.90" fill="#333333"/>
<rect x="353.18" y="743.90" width="13.48" height="11.00" fill="#333333"/>
<rect x="367.86" y="733.90" width="13.48" height="21.00" fill="#333333"/>
<rect x="382.53" y="745.50" width="13.48" height="9.40" fill="#333333"/>
<rect x="397.21" y="743.90" width="13.48" height="11.00" fill="#333333"/>
<rect x="411.89" y="752.70" width="13.48" height="2.20" fill="#333333"/>
<rect x="426.56" y="743.90" width="13.48" height="11.00" fill="#333333"/>
<rect x="441.24" y="748.70" width="13.48" height="6.20" fill="#333333"/>
<rect x="455.92" y="750.00" width="13.48" height="4.90" fill="#333333"/>
<rect x="470.59" y="750.90" width="13.48" height="4.00" fill="#333333"/>
<rect x="485.27" y="747.90" width="13.48" height="7.00" fill="#333333"/>
<rect x="499.95" y="748.70" width="13.48" height="6.20" fill="#333333"/>
<rect x="514.62" y="750.00" width="13.48" height="4.90" fill="#333333"/>
<rect x="529.30" y="750.60" width="13.48" height="4.30" fill="#333333"/>
<rect x="543.98" y="748.70" width="13.48" height="6.20" fill="#333333"/>
<rect x="558.66" y="752.70" width="13.48" height="2.20" fill="#333333"/>
<rect x="573.33" y="747.90" width="13.48" height="7.00" fill="#333333"/>
<rect x="588.01" y="737.90" width="13.48" height="17.00" fill="#333333"/>
<rect x="602.69" y="750.90" width="13.48" height="4.00" fill="#333333"/>
<rect x="617.36" y="750.00" width="13.48" height="4.90" fill="#333333"/>
<rect x="632.04" y="748.70" width="13.48" height="6.20" fill="#333333"/>
<rect x="646.72" y="750.00" width="13.48" height="4.90" fill="#333333"/>
<rect x="661.39" y="744.70" width="13.48" height="10.20" fill="#333333"/>
<rect x="676.07" y="750.90" width="13.48" height="4.00" fill="#333333"/>
<rect x="690.75" y="729.90" width="13.48" height="25.00" fill="#333333"/>
<rect x="705.43" y="743.90" width="13.48" height="11.00" fill="#333333"/>
<rect x="720.10" y="748.70" width="13.48" height="6.20" fill="#333333"/>
<rect x="734.78" y="748.70" width="13.48" height="6.20" fill="#333333"/>
<rect x="749.46" y="745.50" width="13.48" height="9.40" fill="#333333"/>
<rect x="764.13" y="742.80" width="13.48" height="12.10" fill="#333333"/>
<rect x="778.81" y="747.90" width="13.48" height="7.00" fill="#333333"/>
<rect x="793.49" y="751.40" width="13.48" height="3.50" fill="#333333"/>
<rect x="808.16" y="747.90" width="13.48" height="7.00" fill="#333333"/>
<rect x="822.84" y="750.60" width="13.48" height="4.30" fill="#333333"/>
<rect x="837.52" y="748.70" width="13.48" height="6.20" fill="#333333"/>
<rect x="852.20" y="739.80" width="13.48" height="15.10" fill="#333333"/>
<rect x="866.87" y="747.90" width="13.48" height="7.00" fill="#333333"/>
<rect x="881.55" y="742.00" width="13.48" height="12.90" fill="#333333"/>
<rect x="896.23" y="746.80" width="13.48" height="8.10" fill="#333333"/>
<rect x="910.90" y="750.60" width="13.48" height="4.30" fill="#333333"/>
<rect x="925.58" y="751.90" width="13.48" height="3.00" fill="#333333"/>
<rect x="940.26" y="744.70" width="13.48" height="10.20" fill="#333333"/>
<rect x="954.93" y="749.50" width="13.48" height="5.40" fill="#333333"/>
<rect x="969.61" y="744.70" width="13.48" height="10.20" fill="#333333"/>
<rect x="984.29" y="725.00" width="13.48" height="29.90" fill="#333333"/>
<rect x="998.97" y="747.90" width="13.48" height="7.00" fill="#cccccc"/>
<rect x="1013.64" y="748.70" width="13.48" height="6.20" fill="#333333"/>
<rect x="1028.32" y="751.90" width="13.48" height="3.00" fill="#333333"/>
</g>
<g id="axis">
<path d="M147.5 770.5V765.5H1056.5V770.5" fill="none" stroke="#333" stroke-width="1"/>
<path d="M440.5 765.5V770.5" stroke="#333" stroke-width="1"/>
<path d="M734.0 765.5V770.5" stroke="#333" stroke-width="1"/>
<path d="M1027.5 765.5V770.5" stroke="#333" stroke-width="1"/>
</g>
</svg>
<div class="ax" style="left:147.3px;">2021-07-19 10:06:59</div>
<div class="ax" style="left:441.3px;">2021-07-19 10:28:59</div>
<div class="ax" style="left:734.8px;">2021-07-19 10:48:59</div>
<div class="ax" style="left:1028.5px;width:68.5px;overflow:hidden;">2021-07-19 11:08:59</div>

<!-- tooltip -->
<div id="tip">
  <div style="left:10px;top:10px;width:59px;height:36px;background:#6c0473;border-radius:2px;"></div>
  <div style="left:10px;top:10px;width:59px;height:36px;line-height:36px;text-align:center;font-weight:bold;font-size:14.5px;color:#fff;">2.38 M</div>
  <div style="left:79.8px;top:10.5px;line-height:36px;font-size:13px;color:#a6a6a6;">bytes/min</div>
  <div style="left:14px;top:60.8px;line-height:17px;font-size:12.67px;color:#bdbdbd;">2021-07-19 11:06:59 ~ 2021-07-19 11:07:59</div>
  <div style="left:14px;top:100px;line-height:17.4px;font-size:13.5px;color:#fff;">mysql</div>
  <div style="left:21.6px;top:117.6px;line-height:17.4px;font-size:13.4px;color:#fff;">stats_fm_sketch</div>
  <div style="left:29.5px;top:135.5px;line-height:17.4px;font-size:13.6px;color:#fff;">row_245029 ~ row_250253</div>
  <div style="left:13.4px;top:175.6px;line-height:17px;font-size:12px;font-weight:bold;color:#dcdcdc;">START KEY (INCL.):</div>
  <div style="left:17.7px;top:195.3px;line-height:17px;font-size:11.7px;color:#8c8c8c;">7480000000000000ff315f728000000000ff03...</div>
  <div style="left:13.4px;top:225px;line-height:17px;font-size:11.8px;font-weight:bold;color:#dcdcdc;">END KEY (EXCL.):</div>
  <div style="left:17.7px;top:245px;line-height:17px;font-size:11.7px;color:#8c8c8c;">7480000000000000ff315f728000000000ff03...</div>
</div>
</body>
</html>
